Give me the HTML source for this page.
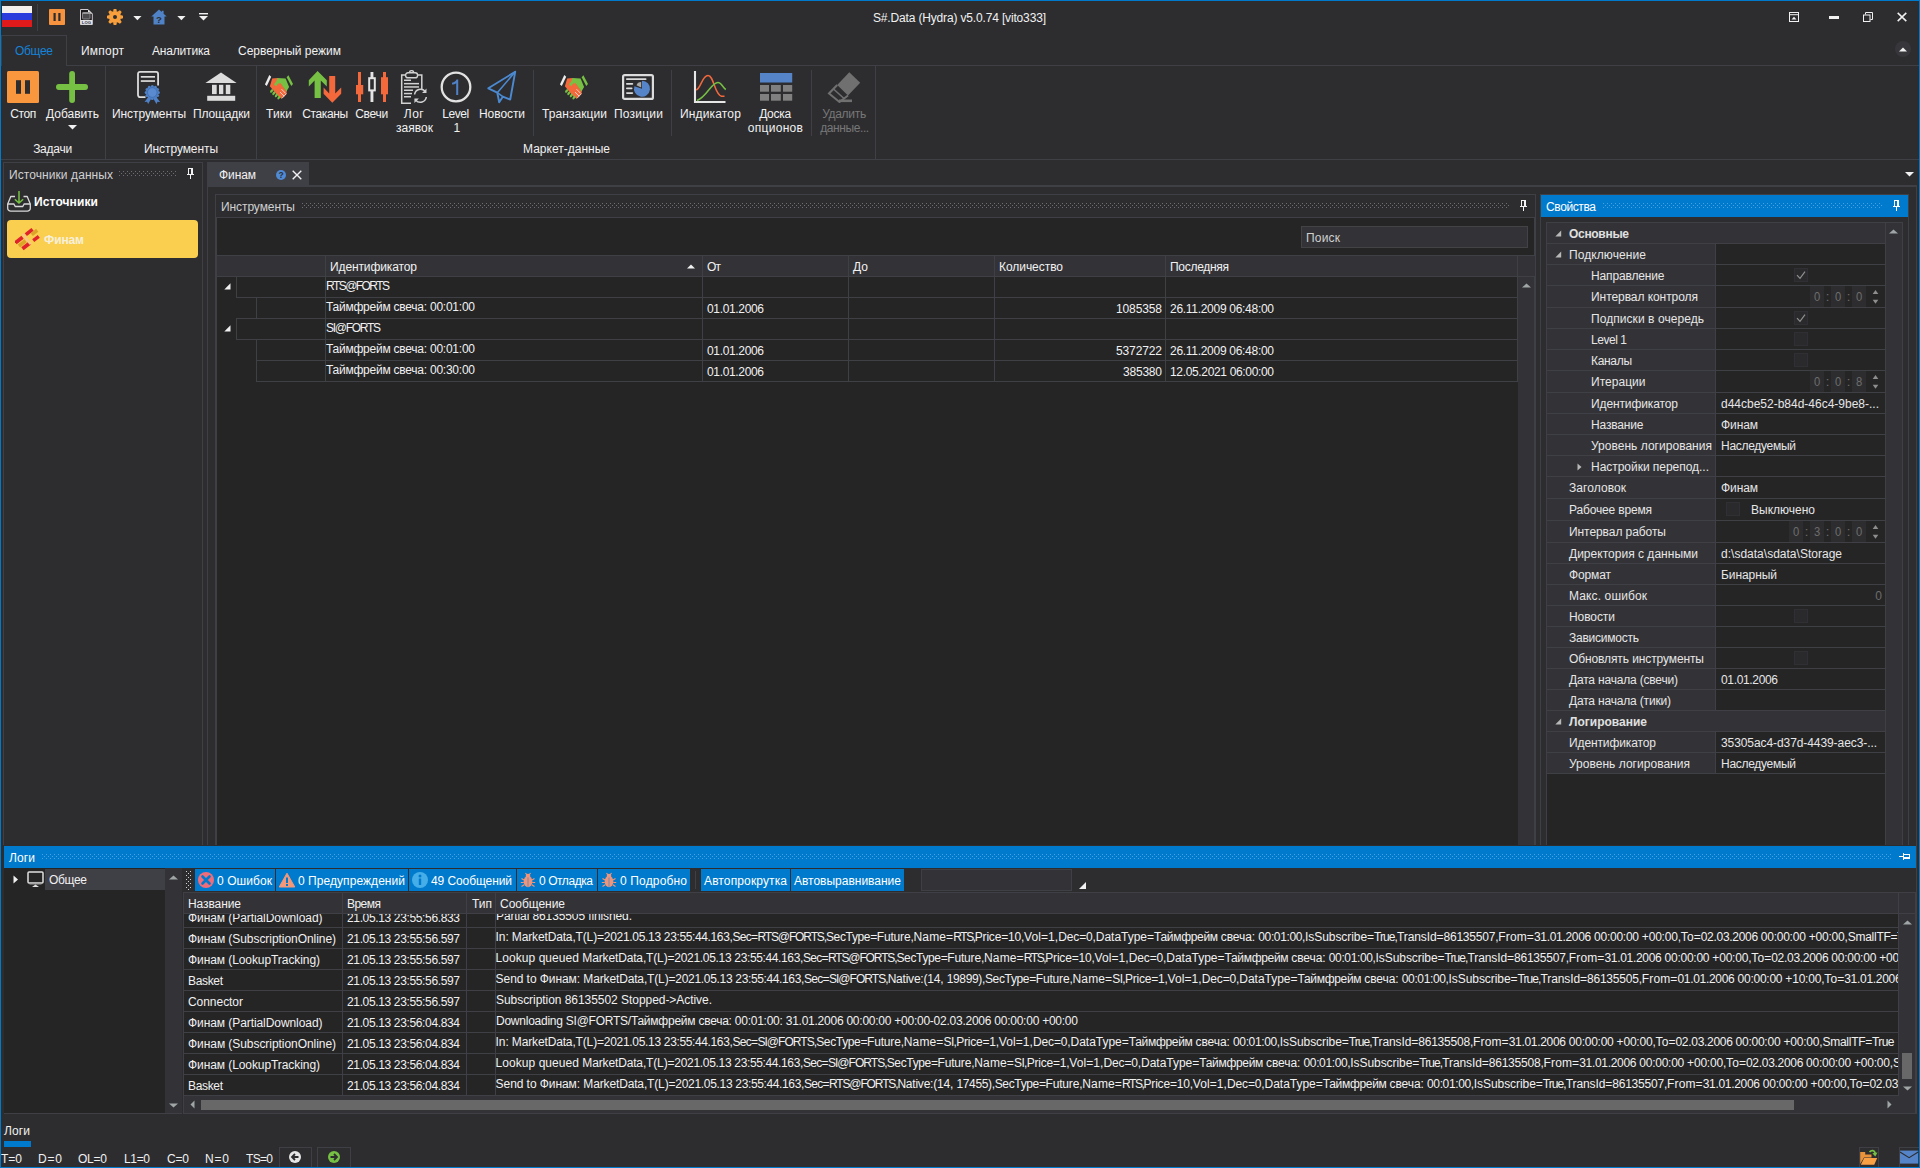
<!DOCTYPE html>
<html><head><meta charset="utf-8"><title>S#.Data (Hydra)</title><style>
html,body{margin:0;padding:0;}
body{width:1920px;height:1168px;background:#2d2d30;position:relative;overflow:hidden;font-family:"Liberation Sans",sans-serif;font-size:12px;color:#f1f1f1;}
div,svg{position:absolute;}
.t{white-space:nowrap;}
.t span{display:inline-block;}
</style></head><body>
<svg style="left:2px;top:6px;" width="30" height="21" viewBox="0 0 30 21"><rect width="30" height="7" fill="#f4f0ee"/><rect y="7" width="30" height="7" fill="#2b3cdc"/><rect y="14" width="30" height="7" fill="#e01a1a"/></svg>
<div style="left:37px;top:4px;width:1px;height:27px;background:#3f3f46;"></div>
<svg style="left:49px;top:9px;" width="16" height="16" viewBox="0 0 16 16"><rect width="16" height="16" rx="1" fill="#f7933e"/><rect x="4.5" y="4" width="2.2" height="8" fill="#2d2d30"/><rect x="9.3" y="4" width="2.2" height="8" fill="#2d2d30"/></svg>
<svg style="left:80px;top:9px;" width="13" height="16" viewBox="0 0 13 16"><path d="M.5 .5H8L12.300 4.800V15.500H.5z" fill="#1b1b1c" stroke="#cfc8d0" stroke-width="1"/><path d="M8 .5L12.300 4.800H8z" fill="#e8e8e8"/><rect x="2.500" y="3.500" width="7.500" height="6.500" rx=".8" fill="#4a4a4c" stroke="#8c8c8e" stroke-width=".9"/><rect x="2.500" y="3.500" width="7.500" height="1.400" fill="#a0a0a4"/><rect x=".5" y="11" width="11.800" height="4.500" fill="#e2e2e4"/><text x="6.400" y="14.700" font-size="4.200" font-weight="bold" text-anchor="middle" fill="#30304a" font-family="Liberation Sans">LOG</text></svg>
<svg style="left:107px;top:9px;" width="16" height="16" viewBox="0 0 16 16"><g transform="translate(8 8)" fill="#f9a03c"><path d="M-1.900 -5.500L-1.300 -8.200H1.300L1.900 -5.500z" transform="rotate(0)"/><path d="M-1.900 -5.500L-1.300 -8.200H1.300L1.900 -5.500z" transform="rotate(45)"/><path d="M-1.900 -5.500L-1.300 -8.200H1.300L1.900 -5.500z" transform="rotate(90)"/><path d="M-1.900 -5.500L-1.300 -8.200H1.300L1.900 -5.500z" transform="rotate(135)"/><path d="M-1.900 -5.500L-1.300 -8.200H1.300L1.900 -5.500z" transform="rotate(180)"/><path d="M-1.900 -5.500L-1.300 -8.200H1.300L1.900 -5.500z" transform="rotate(225)"/><path d="M-1.900 -5.500L-1.300 -8.200H1.300L1.900 -5.500z" transform="rotate(270)"/><path d="M-1.900 -5.500L-1.300 -8.200H1.300L1.900 -5.500z" transform="rotate(315)"/><circle r="6.100"/><circle r="2" fill="#2d2d30"/></g></svg>
<svg style="left:133px;top:16px;" width="9" height="5" viewBox="0 0 9 5"><path d="M.3 0h8.200l-4.100 4.200z" fill="#f1f1f1"/></svg>
<svg style="left:151px;top:9px;" width="16" height="16" viewBox="0 0 16 16"><path d="M8 .6L.3 7.6h2.2V15.5h11V7.6h2.2L12.6 4.7V1.8h-1.8v1.3z" fill="#4f82c6"/><text x="8" y="13.6" font-size="9.5" font-weight="bold" text-anchor="middle" fill="#2d2d30" font-family="Liberation Sans">?</text></svg>
<svg style="left:177px;top:16px;" width="9" height="5" viewBox="0 0 9 5"><path d="M.3 0h8.200l-4.100 4.200z" fill="#f1f1f1"/></svg>
<svg style="left:199px;top:13px;" width="9" height="8" viewBox="0 0 9 8"><rect width="9" height="1.4" fill="#f1f1f1"/><path d="M0 3h9l-4.5 4.5z" fill="#f1f1f1"/></svg>
<div class="t" style="top:10px;line-height:16px;left:873px;letter-spacing:-0.159px;"><span>S#.Data (Hydra) v5.0.74 [vito333]</span></div>
<svg style="left:1789px;top:12px;" width="10" height="10" viewBox="0 0 10 10"><rect x=".5" y=".5" width="9" height="9" fill="none" stroke="#f1f1f1"/><rect x="1" y="2.2" width="8" height="1" fill="#f1f1f1"/><path d="M2.5 7.5h5L5 4.8z" fill="#f1f1f1"/></svg>
<div style="left:1829px;top:16px;width:10px;height:3px;background:#f1f1f1;"></div>
<svg style="left:1863px;top:12px;" width="10" height="10" viewBox="0 0 10 10"><path d="M2.5 2.5v-2h7v7h-2" fill="none" stroke="#f1f1f1" stroke-width="1"/><rect x=".5" y="3" width="6.5" height="6.5" fill="#2d2d30" stroke="#f1f1f1"/></svg>
<svg style="left:1897px;top:12px;" width="10" height="10" viewBox="0 0 10 10"><path d="M.7 .9L9.3 9.1M9.3 .9L.7 9.1" stroke="#f1f1f1" stroke-width="1.5" fill="none"/></svg>
<div style="left:66px;top:65px;width:1853px;height:1px;background:#3f3f46;"></div>
<div style="left:1px;top:35px;width:66px;height:31px;border:1px solid #3f3f46;box-sizing:border-box;border-bottom:none;background:#2d2d30;"></div>
<div class="t" style="top:43px;line-height:16px;left:15px;color:#1583d6;letter-spacing:-0.327px;"><span>Общее</span></div>
<div class="t" style="top:43px;line-height:16px;left:81px;letter-spacing:0.208px;"><span>Импорт</span></div>
<div class="t" style="top:43px;line-height:16px;left:152px;letter-spacing:-0.177px;"><span>Аналитика</span></div>
<div class="t" style="top:43px;line-height:16px;left:238px;letter-spacing:-0.006px;"><span>Серверный режим</span></div>
<svg style="left:1895px;top:41px;" width="16" height="16" viewBox="0 0 16 16"><circle cx="8" cy="8" r="8" fill="#37373b"/><path d="M4 10.5h8L8 6.5z" fill="#f1f1f1"/></svg>
<div style="left:1px;top:159px;width:1918px;height:1px;background:#3f3f46;"></div>
<div style="left:105px;top:66px;width:1px;height:93px;background:#3f3f46;"></div>
<div style="left:256px;top:66px;width:1px;height:93px;background:#3f3f46;"></div>
<div style="left:875px;top:66px;width:1px;height:93px;background:#3f3f46;"></div>
<div style="left:533px;top:70px;width:1px;height:66px;background:#3f3f46;"></div>
<div style="left:671px;top:70px;width:1px;height:66px;background:#3f3f46;"></div>
<div style="left:811px;top:70px;width:1px;height:66px;background:#3f3f46;"></div>
<div class="t" style="top:106px;line-height:16px;left:-177px;width:400px;text-align:center;letter-spacing:-0.403px;"><span>Стоп</span></div>
<div class="t" style="top:106px;line-height:16px;left:-127.5px;width:400px;text-align:center;letter-spacing:-0.007px;"><span>Добавить</span></div>
<svg style="left:68px;top:125px;" width="9" height="5" viewBox="0 0 9 5"><path d="M0 0h9l-4.5 4.5z" fill="#f1f1f1"/></svg>
<div class="t" style="top:106px;line-height:16px;left:-51px;width:400px;text-align:center;letter-spacing:-0.083px;"><span>Инструменты</span></div>
<div class="t" style="top:106px;line-height:16px;left:21.5px;width:400px;text-align:center;letter-spacing:-0.135px;"><span>Площадки</span></div>
<div class="t" style="top:106px;line-height:16px;left:79px;width:400px;text-align:center;letter-spacing:0.179px;"><span>Тики</span></div>
<div class="t" style="top:106px;line-height:16px;left:125px;width:400px;text-align:center;letter-spacing:-0.359px;"><span>Стаканы</span></div>
<div class="t" style="top:106px;line-height:16px;left:171.5px;width:400px;text-align:center;letter-spacing:-0.285px;"><span>Свечи</span></div>
<div class="t" style="top:106px;line-height:16px;left:214px;width:400px;text-align:center;letter-spacing:0.532px;"><span>Лог</span></div>
<div class="t" style="top:120px;line-height:16px;left:214.5px;width:400px;text-align:center;letter-spacing:0.032px;"><span>заявок</span></div>
<div class="t" style="top:106px;line-height:16px;left:255.5px;width:400px;text-align:center;letter-spacing:-0.423px;"><span>Level</span></div>
<div class="t" style="top:120px;line-height:16px;left:256px;width:400px;text-align:center;letter-spacing:-1.8px;"><span>1</span></div>
<div class="t" style="top:106px;line-height:16px;left:302px;width:400px;text-align:center;letter-spacing:-0.076px;"><span>Новости</span></div>
<div class="t" style="top:106px;line-height:16px;left:374.5px;width:400px;text-align:center;letter-spacing:0.073px;"><span>Транзакции</span></div>
<div class="t" style="top:106px;line-height:16px;left:438.5px;width:400px;text-align:center;letter-spacing:0.223px;"><span>Позиции</span></div>
<div class="t" style="top:106px;line-height:16px;left:510.5px;width:400px;text-align:center;letter-spacing:0.175px;"><span>Индикатор</span></div>
<div class="t" style="top:106px;line-height:16px;left:575px;width:400px;text-align:center;letter-spacing:-0.281px;"><span>Доска</span></div>
<div class="t" style="top:120px;line-height:16px;left:575.5px;width:400px;text-align:center;letter-spacing:0.271px;"><span>опционов</span></div>
<div class="t" style="top:106px;line-height:16px;left:644px;width:400px;text-align:center;color:#777777;letter-spacing:-0.304px;"><span>Удалить</span></div>
<div class="t" style="top:120px;line-height:16px;left:644.5px;width:400px;text-align:center;color:#777777;letter-spacing:-0.406px;"><span>данные...</span></div>
<div class="t" style="top:141px;line-height:16px;left:-147.5px;width:400px;text-align:center;letter-spacing:-0.259px;"><span>Задачи</span></div>
<div class="t" style="top:141px;line-height:16px;left:-19px;width:400px;text-align:center;letter-spacing:-0.083px;"><span>Инструменты</span></div>
<div class="t" style="top:141px;line-height:16px;left:366.5px;width:400px;text-align:center;letter-spacing:0.011px;"><span>Маркет-данные</span></div>
<svg style="left:7px;top:71px;" width="32" height="32" viewBox="0 0 32 32"><rect width="32" height="32" rx="1.5" fill="#f8973e"/><rect x="9" y="9.2" width="5" height="13.6" fill="#2d2d30"/><rect x="18" y="9.2" width="5" height="13.6" fill="#2d2d30"/></svg>
<svg style="left:56px;top:71px;" width="32" height="32" viewBox="0 0 32 32"><rect x="13.2" y="0" width="5.8" height="32" rx="2.9" fill="#76c043"/><rect x="0" y="13.1" width="32" height="5.8" rx="2.9" fill="#76c043"/></svg>
<svg style="left:136px;top:70px;" width="26" height="34" viewBox="0 0 26 34"><path d="M9.500 27.100H4a2 2 0 0 1-2-2V3.900a2 2 0 0 1 2-2H20.100a2 2 0 0 1 2 2V15.500" fill="none" stroke="#dcdcdc" stroke-width="1.800"/><rect x="4.800" y="6" width="14.200" height="1.700" fill="#dcdcdc"/><rect x="4.800" y="10.200" width="14.200" height="1.700" fill="#dcdcdc"/><path d="M12.300 27l-3.800 5 2.600-.2 1 2.300 3.200-5.500zM20.300 27l3.800 5-2.600-.2-1 2.300-3.200-5.500z" fill="#4f81c7"/><circle cx="22.40" cy="22.50" r="1.500" fill="#4f81c7"/><circle cx="21.58" cy="25.55" r="1.500" fill="#4f81c7"/><circle cx="19.35" cy="27.78" r="1.500" fill="#4f81c7"/><circle cx="16.30" cy="28.60" r="1.500" fill="#4f81c7"/><circle cx="13.25" cy="27.78" r="1.500" fill="#4f81c7"/><circle cx="11.02" cy="25.55" r="1.500" fill="#4f81c7"/><circle cx="10.20" cy="22.50" r="1.500" fill="#4f81c7"/><circle cx="11.02" cy="19.45" r="1.500" fill="#4f81c7"/><circle cx="13.25" cy="17.22" r="1.500" fill="#4f81c7"/><circle cx="16.30" cy="16.40" r="1.500" fill="#4f81c7"/><circle cx="19.35" cy="17.22" r="1.500" fill="#4f81c7"/><circle cx="21.58" cy="19.45" r="1.500" fill="#4f81c7"/><circle cx="16.300" cy="22.500" r="6" fill="#4f81c7"/><circle cx="16.300" cy="22.500" r="4.800" fill="none" stroke="#3b67a6" stroke-width=".7"/><circle cx="16.300" cy="22.500" r="4.200" fill="#5a8bd0"/></svg>
<svg style="left:205px;top:71px;" width="32" height="32" viewBox="0 0 32 32"><path d="M16 1.6L31.6 12H.4z" fill="#dcdcdc"/><rect x="7" y="13.8" width="4.7" height="9.3" fill="#dcdcdc"/><rect x="14" y="13.8" width="4.3" height="9.3" fill="#dcdcdc"/><rect x="20.8" y="13.8" width="4.5" height="9.3" fill="#dcdcdc"/><rect x="2.2" y="24.8" width="28" height="5" fill="#dcdcdc"/></svg>
<svg style="left:265px;top:74px;" width="29" height="26" viewBox="0 -1 29 26"><g>
<path d="M4.300 .1L6.200 1.700L1.800 10.900L-.1 9.400z" fill="#ececec"/>
<path d="M7.200 3.400L12.500 2.900L21.800 16.500L21.200 19.500L16.500 23.800L12 20L4.900 11.300z" fill="#f4693c"/>
<path d="M12.500 2.900L20.600 3.400L24.100 11.900L22 15.400L21.600 16.700L15.400 8.100L13 8.700L11.300 11L9 10.100L9.600 8.400L11.300 6.600z" fill="#76c043"/>
<path d="M23.400 .2L28 9L26.300 11L21.600 2.300z" fill="#76c043"/>
<g fill="#76c043"><ellipse cx="6.600" cy="16" rx="1.200" ry="2" transform="rotate(35 6.600 16)"/><ellipse cx="8.800" cy="18.300" rx="1.200" ry="2" transform="rotate(35 8.800 18.300)"/><ellipse cx="11.300" cy="20.500" rx="1.200" ry="2" transform="rotate(35 11.300 20.500)"/><ellipse cx="13.900" cy="22.600" rx="1.200" ry="2" transform="rotate(35 13.900 22.600)"/></g>
<path d="M16.500 14.200L20.600 18.300M15 17.100L19.200 21.200" stroke="#f3dcd6" stroke-width=".9" fill="none"/>
<path d="M17 23.300L21.500 18.500" stroke="#e8e0e0" stroke-width=".8" fill="none"/>
</g></svg>
<svg style="left:560px;top:74px;" width="29" height="26" viewBox="0 -1 29 26"><g>
<path d="M4.300 .1L6.200 1.700L1.800 10.900L-.1 9.400z" fill="#ececec"/>
<path d="M7.200 3.400L12.500 2.900L21.800 16.500L21.200 19.500L16.500 23.800L12 20L4.900 11.300z" fill="#f4693c"/>
<path d="M12.500 2.900L20.600 3.400L24.100 11.900L22 15.400L21.600 16.700L15.400 8.100L13 8.700L11.300 11L9 10.100L9.600 8.400L11.300 6.600z" fill="#76c043"/>
<path d="M23.400 .2L28 9L26.300 11L21.600 2.300z" fill="#76c043"/>
<g fill="#76c043"><ellipse cx="6.600" cy="16" rx="1.200" ry="2" transform="rotate(35 6.600 16)"/><ellipse cx="8.800" cy="18.300" rx="1.200" ry="2" transform="rotate(35 8.800 18.300)"/><ellipse cx="11.300" cy="20.500" rx="1.200" ry="2" transform="rotate(35 11.300 20.500)"/><ellipse cx="13.900" cy="22.600" rx="1.200" ry="2" transform="rotate(35 13.900 22.600)"/></g>
<path d="M16.500 14.200L20.600 18.300M15 17.100L19.200 21.200" stroke="#f3dcd6" stroke-width=".9" fill="none"/>
<path d="M17 23.300L21.500 18.500" stroke="#e8e0e0" stroke-width=".8" fill="none"/>
</g></svg>
<svg style="left:308px;top:70px;" width="34" height="34" viewBox="0 0 34 34"><path d="M9.6 1L18.8 10.2V16.4L12.8 10.6V28H6.6V10.6L.8 16.4V10.2z" fill="#76c043"/><path d="M21.2 6H27.2V23.4L33.2 17.6V23.8L24.3 32.8L15.6 23.8V17.6L21.2 23.4z" fill="#f4693c"/></svg>
<svg style="left:355px;top:71px;" width="34" height="32" viewBox="0 0 34 32"><rect x="3" y="1" width="3" height="30" fill="#f4693c"/><rect x="1" y="14" width="7.2" height="9.3" fill="#f4693c"/><rect x="15.5" y="1" width="2.9" height="30" fill="#e4e4e4"/><rect x="14.2" y="7.2" width="5.6" height="12.2" fill="#2d2d30" stroke="#e4e4e4" stroke-width="2"/><rect x="28" y="1" width="3" height="30" fill="#f4693c"/><rect x="26" y="6.2" width="7" height="17.1" fill="#f4693c"/></svg>
<svg style="left:400px;top:70px;" width="30" height="34" viewBox="0 0 30 34"><path d="M11 33.2H1.7V5H6M17 5H21.8V19" fill="none" stroke="#d2d2d2" stroke-width="1.5"/><rect x="5.600" y="2.800" width="12" height="5" rx="2.400" fill="none" stroke="#d2d2d2" stroke-width="1.400"/><path d="M9.400 2.800a2.200 2.200 0 0 1 4.400 0" fill="none" stroke="#d2d2d2" stroke-width="1.300"/><rect x="4" y="9.5" width="7" height="1.5" fill="#d2d2d2"/><rect x="4" y="12.9" width="15" height="1.5" fill="#d2d2d2"/><rect x="4" y="16.2" width="15" height="1.5" fill="#d2d2d2"/><rect x="4" y="19.5" width="9" height="1.5" fill="#d2d2d2"/><rect x="4" y="22.8" width="8" height="1.5" fill="#d2d2d2"/><rect x="4" y="26" width="7" height="1.5" fill="#d2d2d2"/><path d="M14.600 24.500a6 6 0 0 1 10.500-3.200M26.300 27a6 6 0 0 1-10.500 3.200" fill="none" stroke="#d2d2d2" stroke-width="1.500"/><path d="M26.500 18.500v4.500h-4.500zM14.400 33v-4.500h4.500z" fill="#d2d2d2"/></svg>
<svg style="left:440px;top:71px;" width="32" height="32" viewBox="0 0 32 32"><circle cx="16" cy="16" r="14.3" fill="none" stroke="#e2e2e2" stroke-width="2.3"/><path d="M12 13.600L12 11.800C14.500 11.200 15.800 10.200 16.500 8.500H18.200V24H16.200V12.200C15.200 13 13.800 13.500 12 13.600z" fill="#4f81c7"/></svg>
<svg style="left:486px;top:70px;" width="32" height="34" viewBox="0 0 32 34"><path d="M29.200 1.800L2.300 18.300L11.300 22.700L13.200 32.200L16.800 26.700L24.200 29.500z" fill="none" stroke="#4b8ad1" stroke-width="1.900" stroke-linejoin="round"/><path d="M29.200 1.800L11.300 22.700L16.800 26.700" fill="none" stroke="#4b8ad1" stroke-width="1.600" stroke-linejoin="round"/></svg>
<svg style="left:621px;top:73px;" width="34" height="28" viewBox="0 0 34 28"><rect x="2.100" y="2.100" width="29.800" height="23.800" rx="1.500" fill="none" stroke="#dcdcdc" stroke-width="2.200"/><rect x="5" y="5.300" width="20.500" height="1.700" rx=".8" fill="#dcdcdc"/><rect x="5" y="10" width="7.200" height="1.700" rx=".8" fill="#dcdcdc"/><rect x="5" y="14.600" width="6.500" height="1.700" rx=".8" fill="#dcdcdc"/><rect x="5" y="19.200" width="7.200" height="1.700" rx=".8" fill="#dcdcdc"/><path d="M21 15.700V7.700A8 8 0 1 1 13.400 13.200z" fill="#5585c8"/><path d="M20.200 14.500L15.500 12.300a5 5 0 0 1 4.700-3.300z" fill="#a8a8a8"/></svg>
<svg style="left:693px;top:70px;" width="34" height="34" viewBox="0 0 34 34"><path d="M2 1V32H32.500" fill="none" stroke="#e6e6e6" stroke-width="2.100"/><path d="M3.200 20C8 18.500 9 5.500 15 5.500S21.500 25 28.500 26.200H31.500" fill="none" stroke="#f4693c" stroke-width="1.500"/><path d="M4 30.500C14 27 18 12.500 25 12.500C28.500 12.500 30 18 32.800 19.500" fill="none" stroke="#76c043" stroke-width="1.500"/></svg>
<svg style="left:760px;top:73px;" width="33" height="28" viewBox="0 0 33 28"><rect width="32.200" height="9.500" fill="#5585c8"/><rect x="0" y="12" width="9" height="6.700" fill="#808080"/><rect x="11" y="12" width="9.8" height="6.700" fill="#808080"/><rect x="23" y="12" width="9.2" height="6.700" fill="#808080"/><rect x="0" y="21" width="9" height="6.700" fill="#808080"/><rect x="11" y="21" width="9.8" height="6.700" fill="#808080"/><rect x="23" y="21" width="9.2" height="6.700" fill="#808080"/></svg>
<svg style="left:827px;top:71px;" width="34" height="32" viewBox="0 0 34 32"><path d="M22.300 1.200L33.200 11.700L21 24.500L10.200 14z" fill="#707070"/><path d="M10.200 14L2 22.500L12.500 31L21 24.500" fill="none" stroke="#707070" stroke-width="2"/><path d="M6.500 18L17 27.500" stroke="#707070" stroke-width="1.600"/><rect x="12" y="28.500" width="13" height="2.600" fill="#707070"/></svg>
<div style="left:3px;top:162px;width:200px;height:684px;border:1px solid #3f3f46;box-sizing:border-box;border-bottom:none;"></div>
<div class="t" style="top:167px;line-height:16px;left:9px;color:#d0d0d0;letter-spacing:0.078px;"><span>Источники данных</span></div>
<svg style="left:119px;top:171px;" width="58" height="5" viewBox="0 0 58 5"><defs><pattern id="g28_119_171" width="4" height="4" patternUnits="userSpaceOnUse"><rect x="0" y="0" width="1" height="1" fill="#6e6e72"/><rect x="2" y="2" width="1" height="1" fill="#6e6e72"/></pattern></defs><rect width="58" height="5" fill="url(#g28_119_171)"/></svg>
<svg style="left:187px;top:168px;" width="7" height="11" viewBox="0 0 7 11"><g fill="#f1f1f1" shape-rendering="crispEdges"><rect x="1" y="0" width="5" height="1"/><rect x="1" y="0" width="1" height="6"/><rect x="4" y="0" width="2" height="6"/><rect x="0" y="6" width="7" height="1"/><rect x="3" y="7" width="1" height="4"/></g></svg>
<svg style="left:6px;top:190px;" width="27" height="23" viewBox="0 0 27 23"><path d="M9 6.500H4.800L1.700 14V18.200a3 3 0 0 0 3 3H21.300a3 3 0 0 0 3-3V14L21.200 6.500H17.500" fill="none" stroke="#d8d8d8" stroke-width="1.300" stroke-linejoin="round"/><path d="M1.700 14H7.800L9.300 16.500H16.700L18.200 14H24.300" fill="none" stroke="#d8d8d8" stroke-width="1.300"/><path d="M13 1V12.500M8.800 9.300L13 13L17.200 9.300" fill="none" stroke="#76c043" stroke-width="1.500"/></svg>
<div class="t" style="top:194px;line-height:16px;left:34px;color:#ffffff;font-weight:bold;letter-spacing:0.12px;"><span>Источники</span></div>
<div style="left:7px;top:220px;width:191px;height:38px;background:#facf50;border-radius:4px;"></div>
<svg style="left:15px;top:228px;" width="25" height="23" viewBox="0 0 25 23"><rect x="-4.25" y="-1.8" width="8.5" height="3.6" fill="#e0222c" transform="translate(14.2 4) rotate(-38)"/><rect x="-3.5" y="-1.8" width="7" height="3.6" fill="#dca52a" transform="translate(19.5 4.4) rotate(-38)"/><rect x="-3.5" y="-1.7" width="7" height="3.4" fill="#e0222c" transform="translate(21 10.5) rotate(-38)"/><rect x="-4.5" y="-1.9" width="9" height="3.8" fill="#e0222c" transform="translate(4 12) rotate(-38)"/><rect x="-4.25" y="-1.9" width="8.5" height="3.8" fill="#dca52a" transform="translate(7.3 15.3) rotate(-38)"/><rect x="-4.5" y="-1.9" width="9" height="3.8" fill="#e0222c" transform="translate(11 18) rotate(-38)"/><rect x="-6.5" y="-1.2" width="13" height="2.4" fill="#f9c58a" transform="translate(11.5 11) rotate(52)"/></svg>
<div class="t" style="top:232px;line-height:16px;left:44px;color:#f6efdc;font-weight:bold;letter-spacing:-0.108px;"><span>Финам</span></div>
<div style="left:207px;top:162px;width:102px;height:24px;background:#3f3f46;"></div>
<div class="t" style="top:167px;line-height:16px;left:219px;letter-spacing:-0.095px;"><span>Финам</span></div>
<svg style="left:276px;top:169.5px;" width="10" height="10" viewBox="0 0 10 10"><circle cx="5" cy="5" r="5" fill="#4f8ad6"/><text x="5" y="8.300" font-size="8.500" font-weight="bold" text-anchor="middle" fill="#2d2d30" font-family="Liberation Sans">?</text></svg>
<svg style="left:292px;top:169.5px;" width="10" height="10" viewBox="0 0 10 10"><path d="M.7 .7L9.300 9.300M9.300 .7L.7 9.300" stroke="#f1f1f1" stroke-width="1.400" fill="none"/></svg>
<svg style="left:1905px;top:172px;" width="9" height="5" viewBox="0 0 9 5"><path d="M0 0h9l-4.500 4.500z" fill="#f1f1f1"/></svg>
<div style="left:207px;top:185px;width:1710px;height:2px;background:#3f3f46;"></div>
<div style="left:207px;top:186px;width:1px;height:660px;background:#3f3f46;"></div>
<div style="left:1916px;top:186px;width:1px;height:660px;background:#3f3f46;"></div>
<div style="left:215px;top:194px;width:1321px;height:652px;border:1px solid #3f3f46;box-sizing:border-box;border-bottom:none;background:#252526;"></div>
<div style="left:216px;top:195px;width:1319px;height:22px;background:#2d2d30;"></div>
<div style="left:216px;top:217px;width:1319px;height:1px;background:#3f3f46;"></div>
<div class="t" style="top:199px;line-height:16px;left:221px;color:#d0d0d0;letter-spacing:-0.083px;"><span>Инструменты</span></div>
<div style="left:216px;top:218px;width:1px;height:628px;background:#3f3f46;"></div>
<div style="left:1534px;top:218px;width:1px;height:628px;background:#3f3f46;"></div>
<svg style="left:302px;top:203px;" width="1207" height="5" viewBox="0 0 1207 5"><defs><pattern id="g32_302_203" width="4" height="4" patternUnits="userSpaceOnUse"><rect x="0" y="0" width="1" height="1" fill="#6e6e72"/><rect x="2" y="2" width="1" height="1" fill="#6e6e72"/></pattern></defs><rect width="1207" height="5" fill="url(#g32_302_203)"/></svg>
<svg style="left:1520px;top:200px;" width="7" height="11" viewBox="0 0 7 11"><g fill="#f1f1f1" shape-rendering="crispEdges"><rect x="1" y="0" width="5" height="1"/><rect x="1" y="0" width="1" height="6"/><rect x="4" y="0" width="2" height="6"/><rect x="0" y="6" width="7" height="1"/><rect x="3" y="7" width="1" height="4"/></g></svg>
<div style="left:1301px;top:226px;width:227px;height:22px;background:#333337;border:1px solid #434346;box-sizing:border-box;"></div>
<div class="t" style="top:230px;line-height:16px;left:1306px;color:#d0d0d0;letter-spacing:0.186px;"><span>Поиск</span></div>
<div style="left:217px;top:255px;width:1318px;height:22px;background:#333337;"></div>
<div style="left:217px;top:255px;width:1318px;height:1px;background:#3f3f46;"></div>
<div style="left:217px;top:276px;width:1318px;height:1px;background:#3f3f46;"></div>
<div style="left:325px;top:255px;width:1px;height:22px;background:#3f3f46;"></div>
<div style="left:702px;top:255px;width:1px;height:22px;background:#3f3f46;"></div>
<div style="left:848px;top:255px;width:1px;height:22px;background:#3f3f46;"></div>
<div style="left:994px;top:255px;width:1px;height:22px;background:#3f3f46;"></div>
<div style="left:1165px;top:255px;width:1px;height:22px;background:#3f3f46;"></div>
<div style="left:1517px;top:255px;width:1px;height:22px;background:#3f3f46;"></div>
<div class="t" style="top:259px;line-height:16px;left:330px;letter-spacing:-0.112px;"><span>Идентификатор</span></div>
<svg style="left:687px;top:264px;" width="8" height="5" viewBox="0 0 8 5"><path d="M0 4.500h8L4 .5z" fill="#f1f1f1"/></svg>
<div class="t" style="top:259px;line-height:16px;left:707px;letter-spacing:-0.844px;"><span>От</span></div>
<div class="t" style="top:259px;line-height:16px;left:853px;letter-spacing:0.062px;"><span>До</span></div>
<div class="t" style="top:259px;line-height:16px;left:999px;letter-spacing:-0.05px;"><span>Количество</span></div>
<div class="t" style="top:259px;line-height:16px;left:1170px;letter-spacing:-0.293px;"><span>Последняя</span></div>
<div style="left:1518px;top:277px;width:16px;height:569px;background:#333337;"></div>
<svg style="left:1522px;top:283px;" width="9" height="5" viewBox="0 0 9 5"><path d="M0 4.500h9L4.500 .5z" fill="#a0a6a6"/></svg>
<div style="left:236px;top:297px;width:1282px;height:1px;background:#3f3f46;"></div>
<div style="left:236px;top:277px;width:1px;height:21px;background:#3f3f46;"></div>
<div style="left:325px;top:277px;width:1px;height:21px;background:#3f3f46;"></div>
<div style="left:702px;top:277px;width:1px;height:21px;background:#3f3f46;"></div>
<div style="left:848px;top:277px;width:1px;height:21px;background:#3f3f46;"></div>
<div style="left:994px;top:277px;width:1px;height:21px;background:#3f3f46;"></div>
<div style="left:1165px;top:277px;width:1px;height:21px;background:#3f3f46;"></div>
<div style="left:1517px;top:277px;width:1px;height:21px;background:#3f3f46;"></div>
<div class="t" style="top:278px;line-height:16px;left:326px;letter-spacing:-1.552px;"><span>RTS@FORTS</span></div>
<svg style="left:224px;top:283px;" width="7" height="7" viewBox="0 0 7 7"><path d="M6.500 .3V6.500H.3z" fill="#f1f1f1"/></svg>
<div style="left:236px;top:318px;width:1282px;height:1px;background:#3f3f46;"></div>
<div style="left:256px;top:298px;width:1px;height:21px;background:#3f3f46;"></div>
<div style="left:325px;top:298px;width:1px;height:21px;background:#3f3f46;"></div>
<div style="left:702px;top:298px;width:1px;height:21px;background:#3f3f46;"></div>
<div style="left:848px;top:298px;width:1px;height:21px;background:#3f3f46;"></div>
<div style="left:994px;top:298px;width:1px;height:21px;background:#3f3f46;"></div>
<div style="left:1165px;top:298px;width:1px;height:21px;background:#3f3f46;"></div>
<div style="left:1517px;top:298px;width:1px;height:21px;background:#3f3f46;"></div>
<div class="t" style="top:299px;line-height:16px;left:326px;letter-spacing:-0.24px;"><span>Таймфрейм свеча: 00:01:00</span></div>
<div class="t" style="top:301px;line-height:16px;left:707px;letter-spacing:-0.341px;"><span>01.01.2006</span></div>
<div class="t" style="top:301px;line-height:16px;right:758.121px;letter-spacing:-0.121px;"><span>1085358</span></div>
<div class="t" style="top:301px;line-height:16px;left:1170px;letter-spacing:-0.29px;"><span>26.11.2009 06:48:00</span></div>
<div style="left:236px;top:339px;width:1282px;height:1px;background:#3f3f46;"></div>
<div style="left:236px;top:319px;width:1px;height:21px;background:#3f3f46;"></div>
<div style="left:325px;top:319px;width:1px;height:21px;background:#3f3f46;"></div>
<div style="left:702px;top:319px;width:1px;height:21px;background:#3f3f46;"></div>
<div style="left:848px;top:319px;width:1px;height:21px;background:#3f3f46;"></div>
<div style="left:994px;top:319px;width:1px;height:21px;background:#3f3f46;"></div>
<div style="left:1165px;top:319px;width:1px;height:21px;background:#3f3f46;"></div>
<div style="left:1517px;top:319px;width:1px;height:21px;background:#3f3f46;"></div>
<div class="t" style="top:320px;line-height:16px;left:326px;letter-spacing:-1.283px;"><span>SI@FORTS</span></div>
<svg style="left:224px;top:325px;" width="7" height="7" viewBox="0 0 7 7"><path d="M6.500 .3V6.500H.3z" fill="#f1f1f1"/></svg>
<div style="left:256px;top:360px;width:1262px;height:1px;background:#3f3f46;"></div>
<div style="left:256px;top:340px;width:1px;height:21px;background:#3f3f46;"></div>
<div style="left:325px;top:340px;width:1px;height:21px;background:#3f3f46;"></div>
<div style="left:702px;top:340px;width:1px;height:21px;background:#3f3f46;"></div>
<div style="left:848px;top:340px;width:1px;height:21px;background:#3f3f46;"></div>
<div style="left:994px;top:340px;width:1px;height:21px;background:#3f3f46;"></div>
<div style="left:1165px;top:340px;width:1px;height:21px;background:#3f3f46;"></div>
<div style="left:1517px;top:340px;width:1px;height:21px;background:#3f3f46;"></div>
<div class="t" style="top:341px;line-height:16px;left:326px;letter-spacing:-0.24px;"><span>Таймфрейм свеча: 00:01:00</span></div>
<div class="t" style="top:343px;line-height:16px;left:707px;letter-spacing:-0.341px;"><span>01.01.2006</span></div>
<div class="t" style="top:343px;line-height:16px;right:758.121px;letter-spacing:-0.121px;"><span>5372722</span></div>
<div class="t" style="top:343px;line-height:16px;left:1170px;letter-spacing:-0.29px;"><span>26.11.2009 06:48:00</span></div>
<div style="left:256px;top:381px;width:1262px;height:1px;background:#3f3f46;"></div>
<div style="left:256px;top:361px;width:1px;height:21px;background:#3f3f46;"></div>
<div style="left:325px;top:361px;width:1px;height:21px;background:#3f3f46;"></div>
<div style="left:702px;top:361px;width:1px;height:21px;background:#3f3f46;"></div>
<div style="left:848px;top:361px;width:1px;height:21px;background:#3f3f46;"></div>
<div style="left:994px;top:361px;width:1px;height:21px;background:#3f3f46;"></div>
<div style="left:1165px;top:361px;width:1px;height:21px;background:#3f3f46;"></div>
<div style="left:1517px;top:361px;width:1px;height:21px;background:#3f3f46;"></div>
<div class="t" style="top:362px;line-height:16px;left:326px;letter-spacing:-0.24px;"><span>Таймфрейм свеча: 00:30:00</span></div>
<div class="t" style="top:364px;line-height:16px;left:707px;letter-spacing:-0.341px;"><span>01.01.2006</span></div>
<div class="t" style="top:364px;line-height:16px;right:758.211px;letter-spacing:-0.211px;"><span>385380</span></div>
<div class="t" style="top:364px;line-height:16px;left:1170px;letter-spacing:-0.34px;"><span>12.05.2021 06:00:00</span></div>
<div style="left:1540px;top:194px;width:369px;height:652px;border:1px solid #3f3f46;box-sizing:border-box;border-bottom:none;"></div>
<div style="left:1541px;top:195px;width:1367px;height:22px;background:#007acc;width:367px;"></div>
<div class="t" style="top:199px;line-height:16px;left:1546px;color:#ffffff;letter-spacing:-0.385px;"><span>Свойства</span></div>
<svg style="left:1603px;top:203px;" width="279" height="5" viewBox="0 0 279 5"><defs><pattern id="g53_1603_203" width="4" height="4" patternUnits="userSpaceOnUse"><rect x="0" y="0" width="1" height="1" fill="#4a9fdf"/><rect x="2" y="2" width="1" height="1" fill="#4a9fdf"/></pattern></defs><rect width="279" height="5" fill="url(#g53_1603_203)"/></svg>
<svg style="left:1893px;top:200px;" width="7" height="11" viewBox="0 0 7 11"><g fill="#ffffff" shape-rendering="crispEdges"><rect x="1" y="0" width="5" height="1"/><rect x="1" y="0" width="1" height="6"/><rect x="4" y="0" width="2" height="6"/><rect x="0" y="6" width="7" height="1"/><rect x="3" y="7" width="1" height="4"/></g></svg>
<div style="left:1546px;top:222px;width:357px;height:624px;border:1px solid #3f3f46;box-sizing:border-box;border-bottom:none;background:#252526;"></div>
<div style="left:1886px;top:223px;width:16px;height:623px;background:#333337;"></div>
<div style="left:1885px;top:223px;width:1px;height:623px;background:#3f3f46;"></div>
<svg style="left:1889px;top:229px;" width="9" height="5" viewBox="0 0 9 5"><path d="M0 4.500h9L4.500 .5z" fill="#a0a6a6"/></svg>
<div style="left:1547px;top:223px;width:338px;height:20px;background:#333337;"></div>
<div style="left:1547px;top:243px;width:338px;height:1px;background:#3f3f46;"></div>
<div class="t" style="top:226px;line-height:16px;left:1569px;color:#e0e0e0;font-weight:bold;letter-spacing:-0.305px;"><span>Основные</span></div>
<svg style="left:1555px;top:230px;" width="7" height="7" viewBox="0 0 7 7"><path d="M6.200 .6V6.500H.3z" fill="#b8b8b8"/></svg>
<div style="left:1547px;top:244px;width:338px;height:20px;background:#333337;"></div>
<div style="left:1547px;top:264px;width:338px;height:1px;background:#3f3f46;"></div>
<div style="left:1716px;top:244px;width:169px;height:20px;background:#252526;"></div>
<div style="left:1715px;top:244px;width:1px;height:21px;background:#3f3f46;"></div>
<div class="t" style="top:247px;line-height:16px;left:1569px;color:#e6e6e6;letter-spacing:0.09px;"><span>Подключение</span></div>
<svg style="left:1555px;top:251px;" width="7" height="7" viewBox="0 0 7 7"><path d="M6.200 .6V6.500H.3z" fill="#b8b8b8"/></svg>
<div style="left:1547px;top:265px;width:338px;height:20px;background:#333337;"></div>
<div style="left:1547px;top:285px;width:338px;height:1px;background:#3f3f46;"></div>
<div style="left:1716px;top:265px;width:169px;height:20px;background:#252526;"></div>
<div style="left:1715px;top:265px;width:1px;height:21px;background:#3f3f46;"></div>
<div class="t" style="top:268px;line-height:16px;left:1591px;color:#e6e6e6;letter-spacing:-0.148px;"><span>Направление</span></div>
<div style="left:1794px;top:268px;width:14px;height:14px;background:#2a2a2d;border:1px solid #303034;box-sizing:border-box;"></div>
<svg style="left:1794px;top:268px;" width="14" height="14" viewBox="0 0 14 14"><path d="M3 7.200L6 10.300L11 3.700" fill="none" stroke="#909090" stroke-width="1.200"/></svg>
<div style="left:1547px;top:286px;width:338px;height:21px;background:#333337;"></div>
<div style="left:1547px;top:307px;width:338px;height:1px;background:#3f3f46;"></div>
<div style="left:1716px;top:286px;width:169px;height:21px;background:#252526;"></div>
<div style="left:1715px;top:286px;width:1px;height:22px;background:#3f3f46;"></div>
<div class="t" style="top:289px;line-height:16px;left:1591px;color:#e6e6e6;letter-spacing:-0.062px;"><span>Интервал контроля</span></div>
<div style="left:1810px;top:286px;width:14px;height:21px;background:#2d2d30;"></div>
<div class="t" style="top:289px;line-height:16px;left:1617px;width:400px;text-align:center;color:#6d6d6d;font-size:13px;transform:scaleX(.86);"><span>0</span></div>
<div class="t" style="top:289px;line-height:16px;left:1627.5px;width:400px;text-align:center;color:#6d6d6d;font-size:13px;"><span>:</span></div>
<div style="left:1831px;top:286px;width:14px;height:21px;background:#2d2d30;"></div>
<div class="t" style="top:289px;line-height:16px;left:1638px;width:400px;text-align:center;color:#6d6d6d;font-size:13px;transform:scaleX(.86);"><span>0</span></div>
<div class="t" style="top:289px;line-height:16px;left:1648.5px;width:400px;text-align:center;color:#6d6d6d;font-size:13px;"><span>:</span></div>
<div style="left:1852px;top:286px;width:14px;height:21px;background:#2d2d30;"></div>
<div class="t" style="top:289px;line-height:16px;left:1659px;width:400px;text-align:center;color:#6d6d6d;font-size:13px;transform:scaleX(.86);"><span>0</span></div>
<svg style="left:1872px;top:289px;" width="7" height="16" viewBox="0 0 7 16"><path d="M.7 5h5.600L3.500 1z" fill="#8e8e8e"/><path d="M.7 10.800h5.600L3.500 14.800z" fill="#8e8e8e"/></svg>
<div style="left:1547px;top:308px;width:338px;height:20px;background:#333337;"></div>
<div style="left:1547px;top:328px;width:338px;height:1px;background:#3f3f46;"></div>
<div style="left:1716px;top:308px;width:169px;height:20px;background:#252526;"></div>
<div style="left:1715px;top:308px;width:1px;height:21px;background:#3f3f46;"></div>
<div class="t" style="top:311px;line-height:16px;left:1591px;color:#e6e6e6;letter-spacing:0.064px;"><span>Подписки в очередь</span></div>
<div style="left:1794px;top:311px;width:14px;height:14px;background:#2a2a2d;border:1px solid #303034;box-sizing:border-box;"></div>
<svg style="left:1794px;top:311px;" width="14" height="14" viewBox="0 0 14 14"><path d="M3 7.200L6 10.300L11 3.700" fill="none" stroke="#909090" stroke-width="1.200"/></svg>
<div style="left:1547px;top:329px;width:338px;height:20px;background:#333337;"></div>
<div style="left:1547px;top:349px;width:338px;height:1px;background:#3f3f46;"></div>
<div style="left:1716px;top:329px;width:169px;height:20px;background:#252526;"></div>
<div style="left:1715px;top:329px;width:1px;height:21px;background:#3f3f46;"></div>
<div class="t" style="top:332px;line-height:16px;left:1591px;color:#e6e6e6;letter-spacing:-0.451px;"><span>Level 1</span></div>
<div style="left:1794px;top:332px;width:14px;height:14px;background:#2a2a2d;border:1px solid #303034;box-sizing:border-box;"></div>
<div style="left:1547px;top:350px;width:338px;height:20px;background:#333337;"></div>
<div style="left:1547px;top:370px;width:338px;height:1px;background:#3f3f46;"></div>
<div style="left:1716px;top:350px;width:169px;height:20px;background:#252526;"></div>
<div style="left:1715px;top:350px;width:1px;height:21px;background:#3f3f46;"></div>
<div class="t" style="top:353px;line-height:16px;left:1591px;color:#e6e6e6;letter-spacing:-0.318px;"><span>Каналы</span></div>
<div style="left:1794px;top:353px;width:14px;height:14px;background:#2a2a2d;border:1px solid #303034;box-sizing:border-box;"></div>
<div style="left:1547px;top:371px;width:338px;height:21px;background:#333337;"></div>
<div style="left:1547px;top:392px;width:338px;height:1px;background:#3f3f46;"></div>
<div style="left:1716px;top:371px;width:169px;height:21px;background:#252526;"></div>
<div style="left:1715px;top:371px;width:1px;height:22px;background:#3f3f46;"></div>
<div class="t" style="top:374px;line-height:16px;left:1591px;color:#e6e6e6;letter-spacing:0.029px;"><span>Итерации</span></div>
<div style="left:1810px;top:371px;width:14px;height:21px;background:#2d2d30;"></div>
<div class="t" style="top:374px;line-height:16px;left:1617px;width:400px;text-align:center;color:#6d6d6d;font-size:13px;transform:scaleX(.86);"><span>0</span></div>
<div class="t" style="top:374px;line-height:16px;left:1627.5px;width:400px;text-align:center;color:#6d6d6d;font-size:13px;"><span>:</span></div>
<div style="left:1831px;top:371px;width:14px;height:21px;background:#2d2d30;"></div>
<div class="t" style="top:374px;line-height:16px;left:1638px;width:400px;text-align:center;color:#6d6d6d;font-size:13px;transform:scaleX(.86);"><span>0</span></div>
<div class="t" style="top:374px;line-height:16px;left:1648.5px;width:400px;text-align:center;color:#6d6d6d;font-size:13px;"><span>:</span></div>
<div style="left:1852px;top:371px;width:14px;height:21px;background:#2d2d30;"></div>
<div class="t" style="top:374px;line-height:16px;left:1659px;width:400px;text-align:center;color:#6d6d6d;font-size:13px;transform:scaleX(.86);"><span>8</span></div>
<svg style="left:1872px;top:374px;" width="7" height="16" viewBox="0 0 7 16"><path d="M.7 5h5.600L3.500 1z" fill="#8e8e8e"/><path d="M.7 10.800h5.600L3.500 14.800z" fill="#8e8e8e"/></svg>
<div style="left:1547px;top:393px;width:338px;height:20px;background:#333337;"></div>
<div style="left:1547px;top:413px;width:338px;height:1px;background:#3f3f46;"></div>
<div style="left:1716px;top:393px;width:169px;height:20px;background:#252526;"></div>
<div style="left:1715px;top:393px;width:1px;height:21px;background:#3f3f46;"></div>
<div class="t" style="top:396px;line-height:16px;left:1591px;color:#e6e6e6;letter-spacing:-0.112px;"><span>Идентификатор</span></div>
<div class="t" style="top:396px;line-height:16px;left:1721px;color:#e6e6e6;letter-spacing:-0.005px;"><span>d44cbe52-b84d-46c4-9be8-...</span></div>
<div style="left:1547px;top:414px;width:338px;height:20px;background:#333337;"></div>
<div style="left:1547px;top:434px;width:338px;height:1px;background:#3f3f46;"></div>
<div style="left:1716px;top:414px;width:169px;height:20px;background:#252526;"></div>
<div style="left:1715px;top:414px;width:1px;height:21px;background:#3f3f46;"></div>
<div class="t" style="top:417px;line-height:16px;left:1591px;color:#e6e6e6;letter-spacing:-0.163px;"><span>Название</span></div>
<div class="t" style="top:417px;line-height:16px;left:1721px;color:#e6e6e6;letter-spacing:-0.095px;"><span>Финам</span></div>
<div style="left:1547px;top:435px;width:338px;height:20px;background:#333337;"></div>
<div style="left:1547px;top:455px;width:338px;height:1px;background:#3f3f46;"></div>
<div style="left:1716px;top:435px;width:169px;height:20px;background:#252526;"></div>
<div style="left:1715px;top:435px;width:1px;height:21px;background:#3f3f46;"></div>
<div class="t" style="top:438px;line-height:16px;left:1591px;color:#e6e6e6;letter-spacing:0.025px;"><span>Уровень логирования</span></div>
<div class="t" style="top:438px;line-height:16px;left:1721px;color:#e6e6e6;letter-spacing:-0.288px;"><span>Наследуемый</span></div>
<div style="left:1547px;top:456px;width:338px;height:20px;background:#333337;"></div>
<div style="left:1547px;top:476px;width:338px;height:1px;background:#3f3f46;"></div>
<div style="left:1716px;top:456px;width:169px;height:20px;background:#252526;"></div>
<div style="left:1715px;top:456px;width:1px;height:21px;background:#3f3f46;"></div>
<div class="t" style="top:459px;line-height:16px;left:1591px;color:#e6e6e6;letter-spacing:-0.032px;"><span>Настройки перепод...</span></div>
<svg style="left:1577px;top:463px;" width="5" height="8" viewBox="0 0 5 8"><path d="M.5 .5L4.500 4L.5 7.500z" fill="#b8b8b8"/></svg>
<div style="left:1547px;top:477px;width:338px;height:21px;background:#333337;"></div>
<div style="left:1547px;top:498px;width:338px;height:1px;background:#3f3f46;"></div>
<div style="left:1716px;top:477px;width:169px;height:21px;background:#252526;"></div>
<div style="left:1715px;top:477px;width:1px;height:22px;background:#3f3f46;"></div>
<div class="t" style="top:480px;line-height:16px;left:1569px;color:#e6e6e6;letter-spacing:0.071px;"><span>Заголовок</span></div>
<div class="t" style="top:480px;line-height:16px;left:1721px;color:#e6e6e6;letter-spacing:-0.095px;"><span>Финам</span></div>
<div style="left:1547px;top:499px;width:338px;height:21px;background:#333337;"></div>
<div style="left:1547px;top:520px;width:338px;height:1px;background:#3f3f46;"></div>
<div style="left:1716px;top:499px;width:169px;height:21px;background:#252526;"></div>
<div style="left:1715px;top:499px;width:1px;height:22px;background:#3f3f46;"></div>
<div class="t" style="top:502px;line-height:16px;left:1569px;color:#e6e6e6;letter-spacing:-0.165px;"><span>Рабочее время</span></div>
<div style="left:1726px;top:502px;width:14px;height:14px;background:#2a2a2d;border:1px solid #303034;box-sizing:border-box;"></div>
<div class="t" style="top:502px;line-height:16px;left:1751px;color:#e6e6e6;letter-spacing:0.002px;"><span>Выключено</span></div>
<div style="left:1547px;top:521px;width:338px;height:21px;background:#333337;"></div>
<div style="left:1547px;top:542px;width:338px;height:1px;background:#3f3f46;"></div>
<div style="left:1716px;top:521px;width:169px;height:21px;background:#252526;"></div>
<div style="left:1715px;top:521px;width:1px;height:22px;background:#3f3f46;"></div>
<div class="t" style="top:524px;line-height:16px;left:1569px;color:#e6e6e6;letter-spacing:-0.069px;"><span>Интервал работы</span></div>
<div style="left:1789px;top:521px;width:14px;height:21px;background:#2d2d30;"></div>
<div class="t" style="top:524px;line-height:16px;left:1596px;width:400px;text-align:center;color:#6d6d6d;font-size:13px;transform:scaleX(.86);"><span>0</span></div>
<div class="t" style="top:524px;line-height:16px;left:1606.5px;width:400px;text-align:center;color:#6d6d6d;font-size:13px;"><span>:</span></div>
<div style="left:1810px;top:521px;width:14px;height:21px;background:#2d2d30;"></div>
<div class="t" style="top:524px;line-height:16px;left:1617px;width:400px;text-align:center;color:#6d6d6d;font-size:13px;transform:scaleX(.86);"><span>3</span></div>
<div class="t" style="top:524px;line-height:16px;left:1627.5px;width:400px;text-align:center;color:#6d6d6d;font-size:13px;"><span>:</span></div>
<div style="left:1831px;top:521px;width:14px;height:21px;background:#2d2d30;"></div>
<div class="t" style="top:524px;line-height:16px;left:1638px;width:400px;text-align:center;color:#6d6d6d;font-size:13px;transform:scaleX(.86);"><span>0</span></div>
<div class="t" style="top:524px;line-height:16px;left:1648.5px;width:400px;text-align:center;color:#6d6d6d;font-size:13px;"><span>:</span></div>
<div style="left:1852px;top:521px;width:14px;height:21px;background:#2d2d30;"></div>
<div class="t" style="top:524px;line-height:16px;left:1659px;width:400px;text-align:center;color:#6d6d6d;font-size:13px;transform:scaleX(.86);"><span>0</span></div>
<svg style="left:1872px;top:524px;" width="7" height="16" viewBox="0 0 7 16"><path d="M.7 5h5.600L3.500 1z" fill="#8e8e8e"/><path d="M.7 10.800h5.600L3.500 14.800z" fill="#8e8e8e"/></svg>
<div style="left:1547px;top:543px;width:338px;height:20px;background:#333337;"></div>
<div style="left:1547px;top:563px;width:338px;height:1px;background:#3f3f46;"></div>
<div style="left:1716px;top:543px;width:169px;height:20px;background:#252526;"></div>
<div style="left:1715px;top:543px;width:1px;height:21px;background:#3f3f46;"></div>
<div class="t" style="top:546px;line-height:16px;left:1569px;color:#e6e6e6;letter-spacing:0.018px;"><span>Директория с данными</span></div>
<div class="t" style="top:546px;line-height:16px;left:1721px;color:#e6e6e6;letter-spacing:0.012px;"><span>d:\sdata\sdata\Storage</span></div>
<div style="left:1547px;top:564px;width:338px;height:20px;background:#333337;"></div>
<div style="left:1547px;top:584px;width:338px;height:1px;background:#3f3f46;"></div>
<div style="left:1716px;top:564px;width:169px;height:20px;background:#252526;"></div>
<div style="left:1715px;top:564px;width:1px;height:21px;background:#3f3f46;"></div>
<div class="t" style="top:567px;line-height:16px;left:1569px;color:#e6e6e6;letter-spacing:-0.126px;"><span>Формат</span></div>
<div class="t" style="top:567px;line-height:16px;left:1721px;color:#e6e6e6;letter-spacing:-0.075px;"><span>Бинарный</span></div>
<div style="left:1547px;top:585px;width:338px;height:20px;background:#333337;"></div>
<div style="left:1547px;top:605px;width:338px;height:1px;background:#3f3f46;"></div>
<div style="left:1716px;top:585px;width:169px;height:20px;background:#252526;"></div>
<div style="left:1715px;top:585px;width:1px;height:21px;background:#3f3f46;"></div>
<div class="t" style="top:588px;line-height:16px;left:1569px;color:#e6e6e6;letter-spacing:0.122px;"><span>Макс. ошибок</span></div>
<div class="t" style="top:588px;line-height:16px;right:38px;color:#6d6d6d;"><span>0</span></div>
<div style="left:1547px;top:606px;width:338px;height:20px;background:#333337;"></div>
<div style="left:1547px;top:626px;width:338px;height:1px;background:#3f3f46;"></div>
<div style="left:1716px;top:606px;width:169px;height:20px;background:#252526;"></div>
<div style="left:1715px;top:606px;width:1px;height:21px;background:#3f3f46;"></div>
<div class="t" style="top:609px;line-height:16px;left:1569px;color:#e6e6e6;letter-spacing:-0.076px;"><span>Новости</span></div>
<div style="left:1794px;top:609px;width:14px;height:14px;background:#2a2a2d;border:1px solid #303034;box-sizing:border-box;"></div>
<div style="left:1547px;top:627px;width:338px;height:20px;background:#333337;"></div>
<div style="left:1547px;top:647px;width:338px;height:1px;background:#3f3f46;"></div>
<div style="left:1716px;top:627px;width:169px;height:20px;background:#252526;"></div>
<div style="left:1715px;top:627px;width:1px;height:21px;background:#3f3f46;"></div>
<div class="t" style="top:630px;line-height:16px;left:1569px;color:#e6e6e6;letter-spacing:-0.238px;"><span>Зависимость</span></div>
<div style="left:1547px;top:648px;width:338px;height:20px;background:#333337;"></div>
<div style="left:1547px;top:668px;width:338px;height:1px;background:#3f3f46;"></div>
<div style="left:1716px;top:648px;width:169px;height:20px;background:#252526;"></div>
<div style="left:1715px;top:648px;width:1px;height:21px;background:#3f3f46;"></div>
<div class="t" style="top:651px;line-height:16px;left:1569px;color:#e6e6e6;letter-spacing:-0.105px;"><span>Обновлять инструменты</span></div>
<div style="left:1794px;top:651px;width:14px;height:14px;background:#2a2a2d;border:1px solid #303034;box-sizing:border-box;"></div>
<div style="left:1547px;top:669px;width:338px;height:20px;background:#333337;"></div>
<div style="left:1547px;top:689px;width:338px;height:1px;background:#3f3f46;"></div>
<div style="left:1716px;top:669px;width:169px;height:20px;background:#252526;"></div>
<div style="left:1715px;top:669px;width:1px;height:21px;background:#3f3f46;"></div>
<div class="t" style="top:672px;line-height:16px;left:1569px;color:#e6e6e6;letter-spacing:-0.186px;"><span>Дата начала (свечи)</span></div>
<div class="t" style="top:672px;line-height:16px;left:1721px;color:#e6e6e6;letter-spacing:-0.341px;"><span>01.01.2006</span></div>
<div style="left:1547px;top:690px;width:338px;height:20px;background:#333337;"></div>
<div style="left:1547px;top:710px;width:338px;height:1px;background:#3f3f46;"></div>
<div style="left:1716px;top:690px;width:169px;height:20px;background:#252526;"></div>
<div style="left:1715px;top:690px;width:1px;height:21px;background:#3f3f46;"></div>
<div class="t" style="top:693px;line-height:16px;left:1569px;color:#e6e6e6;letter-spacing:-0.178px;"><span>Дата начала (тики)</span></div>
<div style="left:1547px;top:711px;width:338px;height:20px;background:#333337;"></div>
<div style="left:1547px;top:731px;width:338px;height:1px;background:#3f3f46;"></div>
<div class="t" style="top:714px;line-height:16px;left:1569px;color:#e0e0e0;font-weight:bold;letter-spacing:0.002px;"><span>Логирование</span></div>
<svg style="left:1555px;top:718px;" width="7" height="7" viewBox="0 0 7 7"><path d="M6.200 .6V6.500H.3z" fill="#b8b8b8"/></svg>
<div style="left:1547px;top:732px;width:338px;height:20px;background:#333337;"></div>
<div style="left:1547px;top:752px;width:338px;height:1px;background:#3f3f46;"></div>
<div style="left:1716px;top:732px;width:169px;height:20px;background:#252526;"></div>
<div style="left:1715px;top:732px;width:1px;height:21px;background:#3f3f46;"></div>
<div class="t" style="top:735px;line-height:16px;left:1569px;color:#e6e6e6;letter-spacing:-0.112px;"><span>Идентификатор</span></div>
<div class="t" style="top:735px;line-height:16px;left:1721px;color:#e6e6e6;letter-spacing:-0.082px;"><span>35305ac4-d37d-4439-aec3-...</span></div>
<div style="left:1547px;top:753px;width:338px;height:20px;background:#333337;"></div>
<div style="left:1547px;top:773px;width:338px;height:1px;background:#3f3f46;"></div>
<div style="left:1716px;top:753px;width:169px;height:20px;background:#252526;"></div>
<div style="left:1715px;top:753px;width:1px;height:21px;background:#3f3f46;"></div>
<div class="t" style="top:756px;line-height:16px;left:1569px;color:#e6e6e6;letter-spacing:0.025px;"><span>Уровень логирования</span></div>
<div class="t" style="top:756px;line-height:16px;left:1721px;color:#e6e6e6;letter-spacing:-0.288px;"><span>Наследуемый</span></div>
<div style="left:3px;top:845px;width:1915px;height:270px;background:#2d2d30;"></div>
<div style="left:1916px;top:845px;width:1px;height:269px;background:#3f3f46;"></div>
<div style="left:4px;top:846px;width:1912px;height:22px;background:#007acc;"></div>
<div class="t" style="top:850px;line-height:16px;left:9px;color:#ffffff;letter-spacing:0.124px;"><span>Логи</span></div>
<svg style="left:42px;top:854px;" width="1850" height="5" viewBox="0 0 1850 5"><defs><pattern id="g108_42_854" width="4" height="4" patternUnits="userSpaceOnUse"><rect x="0" y="0" width="1" height="1" fill="#4a9fdf"/><rect x="2" y="2" width="1" height="1" fill="#4a9fdf"/></pattern></defs><rect width="1850" height="5" fill="url(#g108_42_854)"/></svg>
<svg style="left:1899px;top:853px;" width="11" height="7" viewBox="0 0 11 7"><g fill="#ffffff" shape-rendering="crispEdges"><rect x="0" y="3" width="4" height="1"/><rect x="4" y="0" width="1" height="7"/><rect x="5" y="1" width="6" height="1"/><rect x="5" y="4" width="6" height="2"/><rect x="10" y="1" width="1" height="5"/></g></svg>
<div style="left:4px;top:868px;width:161px;height:246px;background:#252526;"></div>
<div style="left:165px;top:868px;width:17px;height:246px;background:#333337;"></div>
<div style="left:45px;top:869px;width:120px;height:21px;background:#3f3f46;"></div>
<svg style="left:13px;top:875px;" width="6" height="9" viewBox="0 0 6 9"><path d="M.5 .5L5 4.500L.5 8.500z" fill="#f1f1f1"/></svg>
<svg style="left:27px;top:871px;" width="17" height="17" viewBox="0 0 17 17"><rect x="1" y="1" width="15" height="11" rx="1" fill="none" stroke="#e0e0e0" stroke-width="1.500"/><rect x="2.500" y="12.500" width="12" height="1" fill="#9a9a9a"/><path d="M5 16L8.500 13.500L12 16z" fill="#e0e0e0"/></svg>
<div class="t" style="top:872px;line-height:16px;left:49px;letter-spacing:-0.327px;"><span>Общее</span></div>
<svg style="left:169px;top:875px;" width="9" height="5" viewBox="0 0 9 5"><path d="M0 4.500h9L4.500 .5z" fill="#a0a6a6"/></svg>
<svg style="left:169px;top:1103px;" width="9" height="5" viewBox="0 0 9 5"><path d="M0 .5h9L4.500 4.500z" fill="#a0a6a6"/></svg>
<div style="left:4px;top:1113px;width:178px;height:1px;background:#3f3f46;"></div>
<svg style="left:186px;top:871px;" width="5" height="19" viewBox="0 0 5 19"><defs><pattern id="tbg" width="4" height="4" patternUnits="userSpaceOnUse"><rect x="0" y="0" width="1" height="1" fill="#d0d0d0"/><rect x="2" y="2" width="1" height="1" fill="#d0d0d0"/><rect x="4" y="0" width="1" height="1" fill="#d0d0d0"/></pattern></defs><rect width="5" height="19" fill="url(#tbg)"/></svg>
<div style="left:195px;top:869px;width:80px;height:22px;background:#007acc;"></div>
<svg style="left:198px;top:872px;" width="16" height="16" viewBox="0 0 16 16"><circle cx="8" cy="8" r="8" fill="#ef6d7a"/><path d="M4.500 4.500L11.500 11.500M11.500 4.500L4.500 11.500" stroke="#007acc" stroke-width="2.600" stroke-linecap="round"/></svg>
<div class="t" style="top:873px;line-height:16px;left:217px;color:#ffffff;letter-spacing:0.075px;"><span>0 Ошибок</span></div>
<div style="left:276px;top:869px;width:132px;height:22px;background:#007acc;"></div>
<svg style="left:279px;top:872px;" width="16" height="16" viewBox="0 0 16 16"><path d="M8 1.200L15.800 15H.2z" fill="#f4987a" stroke="#f4987a" stroke-width="1" stroke-linejoin="round"/><rect x="7" y="5.500" width="2" height="5.500" fill="#007acc"/><rect x="7" y="12" width="2" height="2" fill="#007acc"/></svg>
<div class="t" style="top:873px;line-height:16px;left:298px;color:#ffffff;letter-spacing:0.056px;"><span>0 Предупреждений</span></div>
<div style="left:409px;top:869px;width:107px;height:22px;background:#007acc;"></div>
<svg style="left:412px;top:872px;" width="16" height="16" viewBox="0 0 16 16"><circle cx="8" cy="8" r="8" fill="#45aee8"/><rect x="6.800" y="6.500" width="2.400" height="6.500" fill="#007acc"/><circle cx="8" cy="4" r="1.500" fill="#007acc"/></svg>
<div class="t" style="top:873px;line-height:16px;left:431px;color:#ffffff;letter-spacing:-0.093px;"><span>49 Сообщений</span></div>
<div style="left:517px;top:869px;width:80px;height:22px;background:#007acc;"></div>
<svg style="left:520px;top:872px;" width="16" height="16" viewBox="0 0 16 16"><g fill="#f0957a"><ellipse cx="8" cy="9.500" rx="4.300" ry="5.800"/><circle cx="8" cy="4" r="2.300"/></g><path d="M5.500 1L7 3M10.500 1L9 3M1.500 6.500L4 8M14.500 6.500L12 8M.8 10.500H3.800M15.200 10.500H12.200M1.500 14.500L4.200 12.800M14.500 14.500L11.800 12.800" stroke="#f0957a" stroke-width="1.200" fill="none"/><path d="M8 5.500V15" stroke="#7d8fae" stroke-width="1.200"/></svg>
<div class="t" style="top:873px;line-height:16px;left:539px;color:#ffffff;letter-spacing:-0.431px;"><span>0 Отладка</span></div>
<div style="left:598px;top:869px;width:92px;height:22px;background:#007acc;"></div>
<svg style="left:601px;top:872px;" width="16" height="16" viewBox="0 0 16 16"><g fill="#f0957a"><ellipse cx="8" cy="9.500" rx="4.300" ry="5.800"/><circle cx="8" cy="4" r="2.300"/></g><path d="M5.500 1L7 3M10.500 1L9 3M1.500 6.500L4 8M14.500 6.500L12 8M.8 10.500H3.800M15.200 10.500H12.200M1.500 14.500L4.200 12.800M14.500 14.500L11.800 12.800" stroke="#f0957a" stroke-width="1.200" fill="none"/><path d="M8 5.500V15" stroke="#7d8fae" stroke-width="1.200"/></svg>
<div class="t" style="top:873px;line-height:16px;left:620px;color:#ffffff;letter-spacing:0.158px;"><span>0 Подробно</span></div>
<div style="left:701px;top:869px;width:89px;height:22px;background:#007acc;"></div>
<div class="t" style="top:873px;line-height:16px;left:704px;color:#ffffff;letter-spacing:0.127px;"><span>Автопрокрутка</span></div>
<div style="left:791px;top:869px;width:113px;height:22px;background:#007acc;"></div>
<div class="t" style="top:873px;line-height:16px;left:794px;color:#ffffff;letter-spacing:-0.009px;"><span>Автовыравнивание</span></div>
<div style="left:695px;top:871px;width:1px;height:18px;background:#3f3f46;"></div>
<div style="left:921px;top:869px;width:151px;height:22px;background:#333337;border:1px solid #3f3f46;box-sizing:border-box;"></div>
<svg style="left:1079px;top:882px;" width="7" height="7" viewBox="0 0 7 7"><path d="M7 0V7H0z" fill="#f1f1f1"/></svg>
<div style="left:183px;top:892px;width:1732px;height:204px;background:#252526;"></div>
<div style="left:183px;top:892px;width:1px;height:222px;background:#3f3f46;"></div>
<div style="left:184px;top:927px;width:1715px;height:1px;background:#3f3f46;"></div>
<div style="left:342px;top:907px;width:1px;height:21px;background:#3f3f46;"></div>
<div style="left:466px;top:907px;width:1px;height:21px;background:#3f3f46;"></div>
<div style="left:495px;top:907px;width:1px;height:21px;background:#3f3f46;"></div>
<div class="t" style="top:910px;line-height:16px;left:188px;letter-spacing:-0.072px;"><span>Финам (PartialDownload)</span></div>
<div class="t" style="top:910px;line-height:16px;left:347px;letter-spacing:-0.356px;"><span>21.05.13 23:55:56.833</span></div>
<div class="t" style="top:908px;line-height:16px;left:496px;width:1402px;overflow:hidden;letter-spacing:-0.111px;"><span>Partial 86135505 finished.</span></div>
<div style="left:184px;top:948px;width:1715px;height:1px;background:#3f3f46;"></div>
<div style="left:342px;top:928px;width:1px;height:21px;background:#3f3f46;"></div>
<div style="left:466px;top:928px;width:1px;height:21px;background:#3f3f46;"></div>
<div style="left:495px;top:928px;width:1px;height:21px;background:#3f3f46;"></div>
<div class="t" style="top:931px;line-height:16px;left:188px;letter-spacing:-0.057px;"><span>Финам (SubscriptionOnline)</span></div>
<div class="t" style="top:931px;line-height:16px;left:347px;letter-spacing:-0.356px;"><span>21.05.13 23:55:56.597</span></div>
<div class="t" style="left:495.6px;top:929px;width:1402.4px;height:16px;line-height:16px;overflow:hidden;"><span style="position:absolute;left:0.00px;top:0;white-space:pre;letter-spacing:-0.107px;">In: </span><span style="position:absolute;left:16.25px;top:0;white-space:pre;letter-spacing:-0.148px;">MarketData,T(L)=</span><span style="position:absolute;left:108.25px;top:0;white-space:pre;letter-spacing:-0.309px;">2021.05.13 </span><span style="position:absolute;left:168.25px;top:0;white-space:pre;letter-spacing:-0.37px;">23:55:44.163,</span><span style="position:absolute;left:236.85px;top:0;white-space:pre;letter-spacing:-0.675px;">Sec=</span><span style="position:absolute;left:261.85px;top:0;white-space:pre;letter-spacing:-1.125px;">RTS@FORTS,</span><span style="position:absolute;left:330.35px;top:0;white-space:pre;letter-spacing:-0.352px;">SecType=</span><span style="position:absolute;left:381.25px;top:0;white-space:pre;letter-spacing:-0.188px;">Future,</span><span style="position:absolute;left:417.95px;top:0;white-space:pre;letter-spacing:0.144px;">Name=</span><span style="position:absolute;left:457.70px;top:0;white-space:pre;letter-spacing:-1.408px;">RTS,</span><span style="position:absolute;left:479.20px;top:0;white-space:pre;letter-spacing:-0.199px;">Price=10,</span><span style="position:absolute;left:528.45px;top:0;white-space:pre;letter-spacing:0.092px;">Vol=1,</span><span style="position:absolute;left:562.70px;top:0;white-space:pre;letter-spacing:-0.145px;">Dec=0,</span><span style="position:absolute;left:600.20px;top:0;white-space:pre;letter-spacing:-0.014px;">DataType=</span><span style="position:absolute;left:658.45px;top:0;white-space:pre;letter-spacing:-0.319px;">Таймфрейм </span><span style="position:absolute;left:725.20px;top:0;white-space:pre;letter-spacing:-0.088px;">свеча: </span><span style="position:absolute;left:762.70px;top:0;white-space:pre;letter-spacing:-0.367px;">00:01:00,</span><span style="position:absolute;left:809.45px;top:0;white-space:pre;letter-spacing:-0.059px;">IsSubscribe=</span><span style="position:absolute;left:878.45px;top:0;white-space:pre;letter-spacing:-0.915px;">True,</span><span style="position:absolute;left:901.45px;top:0;white-space:pre;letter-spacing:-0.106px;">TransId=</span><span style="position:absolute;left:947.85px;top:0;white-space:pre;letter-spacing:-0.203px;">86135507,</span><span style="position:absolute;left:1002.75px;top:0;white-space:pre;letter-spacing:0.118px;">From=</span><span style="position:absolute;left:1038.35px;top:0;white-space:pre;letter-spacing:-0.3px;">31.01.2006 </span><span style="position:absolute;left:1098.45px;top:0;white-space:pre;letter-spacing:-0.25px;">00:00:00 </span><span style="position:absolute;left:1146.25px;top:0;white-space:pre;letter-spacing:-0.197px;">+00:00,</span><span style="position:absolute;left:1185.25px;top:0;white-space:pre;letter-spacing:0.072px;">To=</span><span style="position:absolute;left:1205.15px;top:0;white-space:pre;letter-spacing:-0.299px;">02.03.2006 </span><span style="position:absolute;left:1265.25px;top:0;white-space:pre;letter-spacing:-0.25px;">00:00:00 </span><span style="position:absolute;left:1313.05px;top:0;white-space:pre;letter-spacing:-0.197px;">+00:00,</span><span style="position:absolute;left:1352.05px;top:0;white-space:pre;letter-spacing:-0.247px;">SmallTF=</span><span style="position:absolute;left:1401.75px;top:0;white-space:pre;letter-spacing:-0.633px;">True</span></div>
<div style="left:184px;top:969px;width:1715px;height:1px;background:#3f3f46;"></div>
<div style="left:342px;top:949px;width:1px;height:21px;background:#3f3f46;"></div>
<div style="left:466px;top:949px;width:1px;height:21px;background:#3f3f46;"></div>
<div style="left:495px;top:949px;width:1px;height:21px;background:#3f3f46;"></div>
<div class="t" style="top:952px;line-height:16px;left:188px;letter-spacing:-0.078px;"><span>Финам (LookupTracking)</span></div>
<div class="t" style="top:952px;line-height:16px;left:347px;letter-spacing:-0.356px;"><span>21.05.13 23:55:56.597</span></div>
<div class="t" style="left:495.6px;top:950px;width:1402.4px;height:16px;line-height:16px;overflow:hidden;"><span style="position:absolute;left:0.00px;top:0;white-space:pre;letter-spacing:0.047px;">Lookup queued </span><span style="position:absolute;left:86.75px;top:0;white-space:pre;letter-spacing:-0.148px;">MarketData,T(L)=</span><span style="position:absolute;left:178.75px;top:0;white-space:pre;letter-spacing:-0.309px;">2021.05.13 </span><span style="position:absolute;left:238.75px;top:0;white-space:pre;letter-spacing:-0.37px;">23:55:44.163,</span><span style="position:absolute;left:307.35px;top:0;white-space:pre;letter-spacing:-0.672px;">Sec=</span><span style="position:absolute;left:332.35px;top:0;white-space:pre;letter-spacing:-1.125px;">RTS@FORTS,</span><span style="position:absolute;left:400.85px;top:0;white-space:pre;letter-spacing:-0.351px;">SecType=</span><span style="position:absolute;left:451.75px;top:0;white-space:pre;letter-spacing:-0.188px;">Future,</span><span style="position:absolute;left:488.45px;top:0;white-space:pre;letter-spacing:0.144px;">Name=</span><span style="position:absolute;left:528.20px;top:0;white-space:pre;letter-spacing:-1.406px;">RTS,</span><span style="position:absolute;left:549.70px;top:0;white-space:pre;letter-spacing:-0.198px;">Price=10,</span><span style="position:absolute;left:598.95px;top:0;white-space:pre;letter-spacing:0.091px;">Vol=1,</span><span style="position:absolute;left:633.20px;top:0;white-space:pre;letter-spacing:-0.143px;">Dec=0,</span><span style="position:absolute;left:670.70px;top:0;white-space:pre;letter-spacing:-0.014px;">DataType=</span><span style="position:absolute;left:728.95px;top:0;white-space:pre;letter-spacing:-0.319px;">Таймфрейм </span><span style="position:absolute;left:795.70px;top:0;white-space:pre;letter-spacing:-0.089px;">свеча: </span><span style="position:absolute;left:833.20px;top:0;white-space:pre;letter-spacing:-0.368px;">00:01:00,</span><span style="position:absolute;left:879.95px;top:0;white-space:pre;letter-spacing:-0.059px;">IsSubscribe=</span><span style="position:absolute;left:948.95px;top:0;white-space:pre;letter-spacing:-0.915px;">True,</span><span style="position:absolute;left:971.95px;top:0;white-space:pre;letter-spacing:-0.107px;">TransId=</span><span style="position:absolute;left:1018.35px;top:0;white-space:pre;letter-spacing:-0.203px;">86135507,</span><span style="position:absolute;left:1073.25px;top:0;white-space:pre;letter-spacing:0.117px;">From=</span><span style="position:absolute;left:1108.85px;top:0;white-space:pre;letter-spacing:-0.3px;">31.01.2006 </span><span style="position:absolute;left:1168.95px;top:0;white-space:pre;letter-spacing:-0.25px;">00:00:00 </span><span style="position:absolute;left:1216.75px;top:0;white-space:pre;letter-spacing:-0.196px;">+00:00,</span><span style="position:absolute;left:1255.75px;top:0;white-space:pre;letter-spacing:0.07px;">To=</span><span style="position:absolute;left:1275.65px;top:0;white-space:pre;letter-spacing:-0.3px;">02.03.2006 </span><span style="position:absolute;left:1335.75px;top:0;white-space:pre;letter-spacing:-0.25px;">00:00:00 </span><span style="position:absolute;left:1383.55px;top:0;white-space:pre;letter-spacing:-0.196px;">+00:00,</span><span style="position:absolute;left:1422.55px;top:0;white-space:pre;letter-spacing:-0.248px;">SmallTF=</span><span style="position:absolute;left:1472.25px;top:0;white-space:pre;letter-spacing:-0.633px;">True</span></div>
<div style="left:184px;top:990px;width:1715px;height:1px;background:#3f3f46;"></div>
<div style="left:342px;top:970px;width:1px;height:21px;background:#3f3f46;"></div>
<div style="left:466px;top:970px;width:1px;height:21px;background:#3f3f46;"></div>
<div style="left:495px;top:970px;width:1px;height:21px;background:#3f3f46;"></div>
<div class="t" style="top:973px;line-height:16px;left:188px;letter-spacing:-0.338px;"><span>Basket</span></div>
<div class="t" style="top:973px;line-height:16px;left:347px;letter-spacing:-0.356px;"><span>21.05.13 23:55:56.597</span></div>
<div class="t" style="left:495.6px;top:971px;width:1402.4px;height:16px;line-height:16px;overflow:hidden;"><span style="position:absolute;left:0.00px;top:0;white-space:pre;letter-spacing:-0.067px;">Send to Финам: </span><span style="position:absolute;left:87.75px;top:0;white-space:pre;letter-spacing:-0.148px;">MarketData,T(L)=</span><span style="position:absolute;left:179.75px;top:0;white-space:pre;letter-spacing:-0.309px;">2021.05.13 </span><span style="position:absolute;left:239.75px;top:0;white-space:pre;letter-spacing:-0.37px;">23:55:44.163,</span><span style="position:absolute;left:308.35px;top:0;white-space:pre;letter-spacing:-0.672px;">Sec=</span><span style="position:absolute;left:333.35px;top:0;white-space:pre;letter-spacing:-0.951px;">SI@FORTS,</span><span style="position:absolute;left:392.10px;top:0;white-space:pre;letter-spacing:-0.23px;">Native:</span><span style="position:absolute;left:427.85px;top:0;white-space:pre;letter-spacing:-0.153px;">(14, </span><span style="position:absolute;left:451.10px;top:0;white-space:pre;letter-spacing:-0.35px;">19899),</span><span style="position:absolute;left:489.35px;top:0;white-space:pre;letter-spacing:-0.351px;">SecType=</span><span style="position:absolute;left:540.25px;top:0;white-space:pre;letter-spacing:-0.188px;">Future,</span><span style="position:absolute;left:576.95px;top:0;white-space:pre;letter-spacing:0.144px;">Name=</span><span style="position:absolute;left:616.70px;top:0;white-space:pre;letter-spacing:-0.641px;">SI,</span><span style="position:absolute;left:629.45px;top:0;white-space:pre;letter-spacing:-0.232px;">Price=1,</span><span style="position:absolute;left:671.95px;top:0;white-space:pre;letter-spacing:0.091px;">Vol=1,</span><span style="position:absolute;left:706.20px;top:0;white-space:pre;letter-spacing:-0.143px;">Dec=0,</span><span style="position:absolute;left:743.70px;top:0;white-space:pre;letter-spacing:-0.014px;">DataType=</span><span style="position:absolute;left:801.95px;top:0;white-space:pre;letter-spacing:-0.319px;">Таймфрейм </span><span style="position:absolute;left:868.70px;top:0;white-space:pre;letter-spacing:-0.089px;">свеча: </span><span style="position:absolute;left:906.20px;top:0;white-space:pre;letter-spacing:-0.368px;">00:01:00,</span><span style="position:absolute;left:952.95px;top:0;white-space:pre;letter-spacing:-0.059px;">IsSubscribe=</span><span style="position:absolute;left:1021.95px;top:0;white-space:pre;letter-spacing:-0.915px;">True,</span><span style="position:absolute;left:1044.95px;top:0;white-space:pre;letter-spacing:-0.107px;">TransId=</span><span style="position:absolute;left:1091.35px;top:0;white-space:pre;letter-spacing:-0.203px;">86135505,</span><span style="position:absolute;left:1146.25px;top:0;white-space:pre;letter-spacing:0.117px;">From=</span><span style="position:absolute;left:1181.85px;top:0;white-space:pre;letter-spacing:-0.3px;">01.01.2006 </span><span style="position:absolute;left:1241.95px;top:0;white-space:pre;letter-spacing:-0.25px;">00:00:00 </span><span style="position:absolute;left:1289.75px;top:0;white-space:pre;letter-spacing:-0.196px;">+10:00,</span><span style="position:absolute;left:1328.75px;top:0;white-space:pre;letter-spacing:0.07px;">To=</span><span style="position:absolute;left:1348.65px;top:0;white-space:pre;letter-spacing:-0.3px;">31.01.2006 </span><span style="position:absolute;left:1408.75px;top:0;white-space:pre;letter-spacing:-0.25px;">00:00:00 </span></div>
<div style="left:184px;top:1011px;width:1715px;height:1px;background:#3f3f46;"></div>
<div style="left:342px;top:991px;width:1px;height:21px;background:#3f3f46;"></div>
<div style="left:466px;top:991px;width:1px;height:21px;background:#3f3f46;"></div>
<div style="left:495px;top:991px;width:1px;height:21px;background:#3f3f46;"></div>
<div class="t" style="top:994px;line-height:16px;left:188px;letter-spacing:-0.047px;"><span>Connector</span></div>
<div class="t" style="top:994px;line-height:16px;left:347px;letter-spacing:-0.356px;"><span>21.05.13 23:55:56.597</span></div>
<div class="t" style="top:992px;line-height:16px;left:496px;width:1402px;overflow:hidden;letter-spacing:-0.049px;"><span>Subscription 86135502 Stopped-&gt;Active.</span></div>
<div style="left:184px;top:1032px;width:1715px;height:1px;background:#3f3f46;"></div>
<div style="left:342px;top:1012px;width:1px;height:21px;background:#3f3f46;"></div>
<div style="left:466px;top:1012px;width:1px;height:21px;background:#3f3f46;"></div>
<div style="left:495px;top:1012px;width:1px;height:21px;background:#3f3f46;"></div>
<div class="t" style="top:1015px;line-height:16px;left:188px;letter-spacing:-0.072px;"><span>Финам (PartialDownload)</span></div>
<div class="t" style="top:1015px;line-height:16px;left:347px;letter-spacing:-0.356px;"><span>21.05.13 23:56:04.834</span></div>
<div class="t" style="top:1013px;line-height:16px;left:496px;width:1402px;overflow:hidden;letter-spacing:-0.244px;"><span>Downloading SI@FORTS/Таймфрейм свеча: 00:01:00: 31.01.2006 00:00:00 +00:00-02.03.2006 00:00:00 +00:00</span></div>
<div style="left:184px;top:1053px;width:1715px;height:1px;background:#3f3f46;"></div>
<div style="left:342px;top:1033px;width:1px;height:21px;background:#3f3f46;"></div>
<div style="left:466px;top:1033px;width:1px;height:21px;background:#3f3f46;"></div>
<div style="left:495px;top:1033px;width:1px;height:21px;background:#3f3f46;"></div>
<div class="t" style="top:1036px;line-height:16px;left:188px;letter-spacing:-0.057px;"><span>Финам (SubscriptionOnline)</span></div>
<div class="t" style="top:1036px;line-height:16px;left:347px;letter-spacing:-0.356px;"><span>21.05.13 23:56:04.834</span></div>
<div class="t" style="left:495.6px;top:1034px;width:1402.4px;height:16px;line-height:16px;overflow:hidden;"><span style="position:absolute;left:0.00px;top:0;white-space:pre;letter-spacing:-0.109px;">In: </span><span style="position:absolute;left:16.25px;top:0;white-space:pre;letter-spacing:-0.148px;">MarketData,T(L)=</span><span style="position:absolute;left:108.25px;top:0;white-space:pre;letter-spacing:-0.309px;">2021.05.13 </span><span style="position:absolute;left:168.25px;top:0;white-space:pre;letter-spacing:-0.37px;">23:55:44.163,</span><span style="position:absolute;left:236.85px;top:0;white-space:pre;letter-spacing:-0.672px;">Sec=</span><span style="position:absolute;left:261.85px;top:0;white-space:pre;letter-spacing:-0.951px;">SI@FORTS,</span><span style="position:absolute;left:320.60px;top:0;white-space:pre;letter-spacing:-0.351px;">SecType=</span><span style="position:absolute;left:371.50px;top:0;white-space:pre;letter-spacing:-0.188px;">Future,</span><span style="position:absolute;left:408.20px;top:0;white-space:pre;letter-spacing:0.144px;">Name=</span><span style="position:absolute;left:447.95px;top:0;white-space:pre;letter-spacing:-0.641px;">SI,</span><span style="position:absolute;left:460.70px;top:0;white-space:pre;letter-spacing:-0.232px;">Price=1,</span><span style="position:absolute;left:503.20px;top:0;white-space:pre;letter-spacing:0.091px;">Vol=1,</span><span style="position:absolute;left:537.45px;top:0;white-space:pre;letter-spacing:-0.143px;">Dec=0,</span><span style="position:absolute;left:574.95px;top:0;white-space:pre;letter-spacing:-0.014px;">DataType=</span><span style="position:absolute;left:633.20px;top:0;white-space:pre;letter-spacing:-0.319px;">Таймфрейм </span><span style="position:absolute;left:699.95px;top:0;white-space:pre;letter-spacing:-0.089px;">свеча: </span><span style="position:absolute;left:737.45px;top:0;white-space:pre;letter-spacing:-0.368px;">00:01:00,</span><span style="position:absolute;left:784.20px;top:0;white-space:pre;letter-spacing:-0.059px;">IsSubscribe=</span><span style="position:absolute;left:853.20px;top:0;white-space:pre;letter-spacing:-0.915px;">True,</span><span style="position:absolute;left:876.20px;top:0;white-space:pre;letter-spacing:-0.107px;">TransId=</span><span style="position:absolute;left:922.60px;top:0;white-space:pre;letter-spacing:-0.203px;">86135508,</span><span style="position:absolute;left:977.50px;top:0;white-space:pre;letter-spacing:0.117px;">From=</span><span style="position:absolute;left:1013.10px;top:0;white-space:pre;letter-spacing:-0.3px;">31.01.2006 </span><span style="position:absolute;left:1073.20px;top:0;white-space:pre;letter-spacing:-0.25px;">00:00:00 </span><span style="position:absolute;left:1121.00px;top:0;white-space:pre;letter-spacing:-0.196px;">+00:00,</span><span style="position:absolute;left:1160.00px;top:0;white-space:pre;letter-spacing:0.07px;">To=</span><span style="position:absolute;left:1179.90px;top:0;white-space:pre;letter-spacing:-0.3px;">02.03.2006 </span><span style="position:absolute;left:1240.00px;top:0;white-space:pre;letter-spacing:-0.25px;">00:00:00 </span><span style="position:absolute;left:1287.80px;top:0;white-space:pre;letter-spacing:-0.196px;">+00:00,</span><span style="position:absolute;left:1326.80px;top:0;white-space:pre;letter-spacing:-0.248px;">SmallTF=</span><span style="position:absolute;left:1376.50px;top:0;white-space:pre;letter-spacing:-0.633px;">True</span></div>
<div style="left:184px;top:1074px;width:1715px;height:1px;background:#3f3f46;"></div>
<div style="left:342px;top:1054px;width:1px;height:21px;background:#3f3f46;"></div>
<div style="left:466px;top:1054px;width:1px;height:21px;background:#3f3f46;"></div>
<div style="left:495px;top:1054px;width:1px;height:21px;background:#3f3f46;"></div>
<div class="t" style="top:1057px;line-height:16px;left:188px;letter-spacing:-0.079px;"><span>Финам (LookupTracking)</span></div>
<div class="t" style="top:1057px;line-height:16px;left:347px;letter-spacing:-0.356px;"><span>21.05.13 23:56:04.834</span></div>
<div class="t" style="left:495.6px;top:1055px;width:1402.4px;height:16px;line-height:16px;overflow:hidden;"><span style="position:absolute;left:0.00px;top:0;white-space:pre;letter-spacing:0.047px;">Lookup queued </span><span style="position:absolute;left:86.75px;top:0;white-space:pre;letter-spacing:-0.148px;">MarketData,T(L)=</span><span style="position:absolute;left:178.75px;top:0;white-space:pre;letter-spacing:-0.309px;">2021.05.13 </span><span style="position:absolute;left:238.75px;top:0;white-space:pre;letter-spacing:-0.37px;">23:55:44.163,</span><span style="position:absolute;left:307.35px;top:0;white-space:pre;letter-spacing:-0.672px;">Sec=</span><span style="position:absolute;left:332.35px;top:0;white-space:pre;letter-spacing:-0.951px;">SI@FORTS,</span><span style="position:absolute;left:391.10px;top:0;white-space:pre;letter-spacing:-0.351px;">SecType=</span><span style="position:absolute;left:442.00px;top:0;white-space:pre;letter-spacing:-0.188px;">Future,</span><span style="position:absolute;left:478.70px;top:0;white-space:pre;letter-spacing:0.144px;">Name=</span><span style="position:absolute;left:518.45px;top:0;white-space:pre;letter-spacing:-0.641px;">SI,</span><span style="position:absolute;left:531.20px;top:0;white-space:pre;letter-spacing:-0.232px;">Price=1,</span><span style="position:absolute;left:573.70px;top:0;white-space:pre;letter-spacing:0.091px;">Vol=1,</span><span style="position:absolute;left:607.95px;top:0;white-space:pre;letter-spacing:-0.143px;">Dec=0,</span><span style="position:absolute;left:645.45px;top:0;white-space:pre;letter-spacing:-0.014px;">DataType=</span><span style="position:absolute;left:703.70px;top:0;white-space:pre;letter-spacing:-0.319px;">Таймфрейм </span><span style="position:absolute;left:770.45px;top:0;white-space:pre;letter-spacing:-0.089px;">свеча: </span><span style="position:absolute;left:807.95px;top:0;white-space:pre;letter-spacing:-0.368px;">00:01:00,</span><span style="position:absolute;left:854.70px;top:0;white-space:pre;letter-spacing:-0.059px;">IsSubscribe=</span><span style="position:absolute;left:923.70px;top:0;white-space:pre;letter-spacing:-0.915px;">True,</span><span style="position:absolute;left:946.70px;top:0;white-space:pre;letter-spacing:-0.107px;">TransId=</span><span style="position:absolute;left:993.10px;top:0;white-space:pre;letter-spacing:-0.203px;">86135508,</span><span style="position:absolute;left:1048.00px;top:0;white-space:pre;letter-spacing:0.117px;">From=</span><span style="position:absolute;left:1083.60px;top:0;white-space:pre;letter-spacing:-0.3px;">31.01.2006 </span><span style="position:absolute;left:1143.70px;top:0;white-space:pre;letter-spacing:-0.25px;">00:00:00 </span><span style="position:absolute;left:1191.50px;top:0;white-space:pre;letter-spacing:-0.196px;">+00:00,</span><span style="position:absolute;left:1230.50px;top:0;white-space:pre;letter-spacing:0.07px;">To=</span><span style="position:absolute;left:1250.40px;top:0;white-space:pre;letter-spacing:-0.3px;">02.03.2006 </span><span style="position:absolute;left:1310.50px;top:0;white-space:pre;letter-spacing:-0.25px;">00:00:00 </span><span style="position:absolute;left:1358.30px;top:0;white-space:pre;letter-spacing:-0.196px;">+00:00,</span><span style="position:absolute;left:1397.30px;top:0;white-space:pre;letter-spacing:-0.248px;">SmallTF=</span><span style="position:absolute;left:1447.00px;top:0;white-space:pre;letter-spacing:-0.633px;">True</span></div>
<div style="left:184px;top:1095px;width:1715px;height:1px;background:#3f3f46;"></div>
<div style="left:342px;top:1075px;width:1px;height:21px;background:#3f3f46;"></div>
<div style="left:466px;top:1075px;width:1px;height:21px;background:#3f3f46;"></div>
<div style="left:495px;top:1075px;width:1px;height:21px;background:#3f3f46;"></div>
<div class="t" style="top:1078px;line-height:16px;left:188px;letter-spacing:-0.338px;"><span>Basket</span></div>
<div class="t" style="top:1078px;line-height:16px;left:347px;letter-spacing:-0.356px;"><span>21.05.13 23:56:04.834</span></div>
<div class="t" style="left:495.6px;top:1076px;width:1402.4px;height:16px;line-height:16px;overflow:hidden;"><span style="position:absolute;left:0.00px;top:0;white-space:pre;letter-spacing:-0.067px;">Send to Финам: </span><span style="position:absolute;left:87.75px;top:0;white-space:pre;letter-spacing:-0.148px;">MarketData,T(L)=</span><span style="position:absolute;left:179.75px;top:0;white-space:pre;letter-spacing:-0.309px;">2021.05.13 </span><span style="position:absolute;left:239.75px;top:0;white-space:pre;letter-spacing:-0.37px;">23:55:44.163,</span><span style="position:absolute;left:308.35px;top:0;white-space:pre;letter-spacing:-0.672px;">Sec=</span><span style="position:absolute;left:333.35px;top:0;white-space:pre;letter-spacing:-1.125px;">RTS@FORTS,</span><span style="position:absolute;left:401.85px;top:0;white-space:pre;letter-spacing:-0.23px;">Native:</span><span style="position:absolute;left:437.60px;top:0;white-space:pre;letter-spacing:-0.153px;">(14, </span><span style="position:absolute;left:460.85px;top:0;white-space:pre;letter-spacing:-0.35px;">17455),</span><span style="position:absolute;left:499.10px;top:0;white-space:pre;letter-spacing:-0.351px;">SecType=</span><span style="position:absolute;left:550.00px;top:0;white-space:pre;letter-spacing:-0.188px;">Future,</span><span style="position:absolute;left:586.70px;top:0;white-space:pre;letter-spacing:0.144px;">Name=</span><span style="position:absolute;left:626.45px;top:0;white-space:pre;letter-spacing:-1.406px;">RTS,</span><span style="position:absolute;left:647.95px;top:0;white-space:pre;letter-spacing:-0.198px;">Price=10,</span><span style="position:absolute;left:697.20px;top:0;white-space:pre;letter-spacing:0.091px;">Vol=1,</span><span style="position:absolute;left:731.45px;top:0;white-space:pre;letter-spacing:-0.143px;">Dec=0,</span><span style="position:absolute;left:768.95px;top:0;white-space:pre;letter-spacing:-0.014px;">DataType=</span><span style="position:absolute;left:827.20px;top:0;white-space:pre;letter-spacing:-0.319px;">Таймфрейм </span><span style="position:absolute;left:893.95px;top:0;white-space:pre;letter-spacing:-0.089px;">свеча: </span><span style="position:absolute;left:931.45px;top:0;white-space:pre;letter-spacing:-0.368px;">00:01:00,</span><span style="position:absolute;left:978.20px;top:0;white-space:pre;letter-spacing:-0.059px;">IsSubscribe=</span><span style="position:absolute;left:1047.20px;top:0;white-space:pre;letter-spacing:-0.915px;">True,</span><span style="position:absolute;left:1070.20px;top:0;white-space:pre;letter-spacing:-0.107px;">TransId=</span><span style="position:absolute;left:1116.60px;top:0;white-space:pre;letter-spacing:-0.203px;">86135507,</span><span style="position:absolute;left:1171.50px;top:0;white-space:pre;letter-spacing:0.117px;">From=</span><span style="position:absolute;left:1207.10px;top:0;white-space:pre;letter-spacing:-0.3px;">31.01.2006 </span><span style="position:absolute;left:1267.20px;top:0;white-space:pre;letter-spacing:-0.25px;">00:00:00 </span><span style="position:absolute;left:1315.00px;top:0;white-space:pre;letter-spacing:-0.196px;">+00:00,</span><span style="position:absolute;left:1354.00px;top:0;white-space:pre;letter-spacing:0.07px;">To=</span><span style="position:absolute;left:1373.90px;top:0;white-space:pre;letter-spacing:-0.3px;">02.03.2006 </span><span style="position:absolute;left:1434.00px;top:0;white-space:pre;letter-spacing:-0.25px;">00:00:00 </span></div>
<div style="left:184px;top:892px;width:1731px;height:22px;background:#333337;"></div>
<div style="left:184px;top:892px;width:1731px;height:1px;background:#3f3f46;"></div>
<div style="left:184px;top:913px;width:1731px;height:1px;background:#3f3f46;"></div>
<div style="left:342px;top:892px;width:1px;height:22px;background:#3f3f46;"></div>
<div style="left:466px;top:892px;width:1px;height:22px;background:#3f3f46;"></div>
<div style="left:495px;top:892px;width:1px;height:22px;background:#3f3f46;"></div>
<div style="left:1898px;top:892px;width:1px;height:22px;background:#3f3f46;"></div>
<div class="t" style="top:896px;line-height:16px;left:188px;letter-spacing:-0.091px;"><span>Название</span></div>
<div class="t" style="top:896px;line-height:16px;left:347px;letter-spacing:-0.528px;"><span>Время</span></div>
<div class="t" style="top:896px;line-height:16px;left:472px;letter-spacing:-0.009px;"><span>Тип</span></div>
<div class="t" style="top:896px;line-height:16px;left:500px;letter-spacing:-0.038px;"><span>Сообщение</span></div>
<div style="left:1899px;top:914px;width:16px;height:182px;background:#333337;"></div>
<div style="left:1898px;top:892px;width:1px;height:204px;background:#3f3f46;"></div>
<div style="left:1915px;top:892px;width:1px;height:222px;background:#3f3f46;"></div>
<svg style="left:1903px;top:920px;" width="9" height="5" viewBox="0 0 9 5"><path d="M0 4.500h9L4.500 .5z" fill="#a0a6a6"/></svg>
<svg style="left:1903px;top:1086px;" width="9" height="5" viewBox="0 0 9 5"><path d="M0 .5h9L4.500 4.500z" fill="#a0a6a6"/></svg>
<div style="left:1902px;top:1053px;width:10px;height:26px;background:#686868;"></div>
<div style="left:184px;top:1096px;width:1731px;height:17px;background:#333337;"></div>
<svg style="left:190px;top:1100px;" width="5" height="9" viewBox="0 0 5 9"><path d="M4.500 .5V8.500L.5 4.500z" fill="#a0a6a6"/></svg>
<svg style="left:1887px;top:1100px;" width="5" height="9" viewBox="0 0 5 9"><path d="M.5 .5V8.500L4.500 4.500z" fill="#a0a6a6"/></svg>
<div style="left:201px;top:1100px;width:1593px;height:10px;background:#686868;"></div>
<div style="left:183px;top:1113px;width:1733px;height:1px;background:#3f3f46;"></div>
<div class="t" style="top:1123px;line-height:16px;left:4px;letter-spacing:0.124px;"><span>Логи</span></div>
<div style="left:4px;top:1141px;width:27px;height:6px;background:#007acc;"></div>
<div class="t" style="top:1151px;line-height:16px;left:1px;letter-spacing:-0.007px;"><span>T=0</span></div>
<div class="t" style="top:1151px;line-height:16px;left:38px;letter-spacing:0.819px;"><span>D=0</span></div>
<div class="t" style="top:1151px;line-height:16px;left:78px;letter-spacing:-0.234px;"><span>OL=0</span></div>
<div class="t" style="top:1151px;line-height:16px;left:124px;letter-spacing:-0.344px;"><span>L1=0</span></div>
<div class="t" style="top:1151px;line-height:16px;left:167px;letter-spacing:-0.181px;"><span>C=0</span></div>
<div class="t" style="top:1151px;line-height:16px;left:205px;letter-spacing:0.819px;"><span>N=0</span></div>
<div class="t" style="top:1151px;line-height:16px;left:246px;letter-spacing:-0.672px;"><span>TS=0</span></div>
<div style="left:279px;top:1147px;width:33px;height:21px;border:1px solid #3f3f46;box-sizing:border-box;"></div>
<div style="left:317px;top:1147px;width:34px;height:21px;border:1px solid #3f3f46;box-sizing:border-box;"></div>
<svg style="left:289px;top:1151px;" width="12" height="12" viewBox="0 0 12 12"><circle cx="6" cy="6" r="6" fill="#e6e6e6"/><path d="M9.500 6H3.500M6 3L3 6L6 9" fill="none" stroke="#2d2d30" stroke-width="1.800"/></svg>
<svg style="left:328px;top:1151px;" width="12" height="12" viewBox="0 0 12 12"><circle cx="6" cy="6" r="6" fill="#76c043"/><path d="M2.500 6H8.500M6 3L9 6L6 9" fill="none" stroke="#2d2d30" stroke-width="1.800"/></svg>
<div style="left:1859px;top:1147px;width:20px;height:21px;border:1px solid #3f3f46;box-sizing:border-box;"></div>
<div style="left:1899px;top:1147px;width:21px;height:21px;border:1px solid #3f3f46;box-sizing:border-box;"></div>
<svg style="left:1860px;top:1149px;" width="18" height="17" viewBox="0 0 18 17"><path d="M.2 15V3H5.200V5.500H11.500V8.500H4z" fill="#e8923a"/><path d="M4.200 9H17.200L14.200 15.800H.8z" fill="#f9a045"/><path d="M9.500 3C11.500 .8 14.500 1.200 15.200 4.200" fill="none" stroke="#76c043" stroke-width="1.800"/><path d="M12.300 4.300L17.500 3.600L15.300 7.600z" fill="#76c043"/></svg>
<svg style="left:1900px;top:1150px;" width="19" height="14" viewBox="0 0 19 14"><rect y=".6" width="18.200" height="13" fill="#5585c8"/><path d="M0 2L9.100 7.600L18.200 2" fill="none" stroke="#2d2d30" stroke-width="1.100"/></svg>
<div style="left:0px;top:0px;width:1920px;height:1px;background:#007acc;"></div>
<div style="left:0px;top:1167px;width:1920px;height:1px;background:#007acc;"></div>
<div style="left:0px;top:0px;width:1px;height:1168px;background:#007acc;"></div>
<div style="left:1919px;top:0px;width:1px;height:1168px;background:#007acc;"></div>
</body></html>
